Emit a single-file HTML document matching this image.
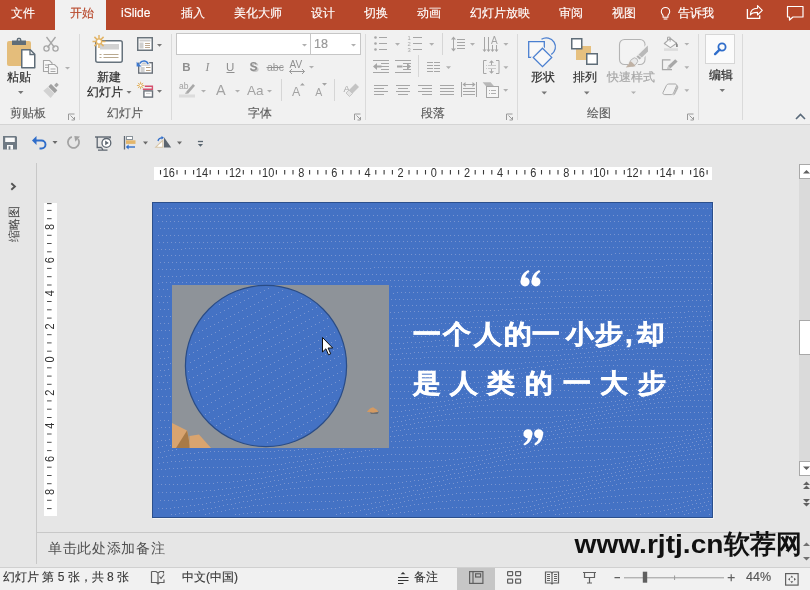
<!DOCTYPE html>
<html><head><meta charset="utf-8">
<style>
*{box-sizing:border-box;margin:0;padding:0}
html,body{width:810px;height:590px;overflow:hidden;background:#e6e6e6;font-family:"Liberation Sans",sans-serif;position:relative}
.a{position:absolute}
svg{position:absolute;left:0;top:0;will-change:transform}
.tab,.glab,.lbl,.st,.a{will-change:transform}
.tab{position:absolute;top:6px;font-size:12px;line-height:14px;color:#fff;white-space:nowrap;-webkit-text-stroke:0.15px currentColor}
.glab{position:absolute;top:106px;font-size:12px;line-height:14px;color:#5c5c5c;white-space:nowrap;-webkit-text-stroke:0.15px #5c5c5c}
.lbl{position:absolute;font-size:12px;line-height:14px;color:#444;white-space:nowrap;-webkit-text-stroke:0.2px currentColor}
.st{position:absolute;top:570px;font-size:12px;line-height:14px;color:#3a3a3a;white-space:nowrap;-webkit-text-stroke:0.15px currentColor}
</style></head><body>
<!-- backgrounds -->
<div class="a" style="left:0;top:0;width:810px;height:30px;background:#b7472a"></div>
<div class="a" style="left:55px;top:0;width:51px;height:30px;background:#f1f1f1"></div>
<div class="a" style="left:0;top:30px;width:810px;height:94px;background:#f1f1f1"></div>
<div class="a" style="left:0;top:124px;width:810px;height:1px;background:#d4d4d4"></div>
<div class="a" style="left:0;top:567px;width:810px;height:23px;background:#f1f1f1;border-top:1px solid #d0d0d0"></div>

<!-- tabs -->
<div class="tab" style="left:11px">文件</div>
<div class="tab" style="left:57px;color:#b7472a;width:49px;text-align:center">开始</div>
<div class="tab" style="left:121px">iSlide</div>
<div class="tab" style="left:181px">插入</div>
<div class="tab" style="left:234px">美化大师</div>
<div class="tab" style="left:311px">设计</div>
<div class="tab" style="left:364px">切换</div>
<div class="tab" style="left:417px">动画</div>
<div class="tab" style="left:470px">幻灯片放映</div>
<div class="tab" style="left:559px">审阅</div>
<div class="tab" style="left:612px">视图</div>
<div class="tab" style="left:678px">告诉我</div>

<svg width="810" height="130" viewBox="0 0 810 130">
<g fill="none" stroke-linecap="butt">
<!-- tab bar icons -->
<!-- bulb -->
<path d="M665.5 7.5a4.2 4.2 0 0 1 4.2 4.2c0 1.8-1.3 2.6-1.8 4v1.6h-4.8v-1.6c-.5-1.4-1.8-2.2-1.8-4a4.2 4.2 0 0 1 4.2-4.2z" stroke="#fff" stroke-width="1.1"/>
<path d="M663.6 19h3.8" stroke="#fff" stroke-width="1.1"/>
<!-- share -->
<path d="M747.4 9v9.4h12.3v-3.2" stroke="#fff" stroke-width="1.3"/>
<path d="M750.4 15C750.5 10.5 753 8.3 757.5 8.3V5.6L762.3 10.4L757.5 15V12.4C754 12.4 751.6 13 750.4 15Z" stroke="#fff" stroke-width="1.1" stroke-linejoin="round"/>
<!-- comment -->
<path d="M787.5 6.5h15.5v10.5h-10l-3.5 3v-3h-2z" stroke="#fff" stroke-width="1.2" stroke-linejoin="round"/>

<!-- separators -->
<path d="M79.5 34v86M171.5 34v86M365.5 34v86M517.5 34v86M698.5 34v86M742.5 34v86" stroke="#dadada" stroke-width="1"/>
<path d="M281.5 79v22M334.5 79v22M442.5 33v22M418.5 55v22" stroke="#d6d6d6" stroke-width="1"/>

<!-- launchers -->
<g stroke="#9a9a9a" stroke-width="1">
<path d="M68.5 120v-6h6"/><path d="M70.5 115.5l4 4M74.5 117v3h-3"/>
<path d="M354.5 120v-6h6"/><path d="M356.5 115.5l4 4M360.5 117v3h-3"/>
<path d="M506.5 120v-6h6"/><path d="M508.5 115.5l4 4M512.5 117v3h-3"/>
<path d="M687.5 120v-6h6"/><path d="M689.5 115.5l4 4M693.5 117v3h-3"/>
</g>
<!-- collapse chevron -->
<path d="M796 119l4.5-4.5 4.5 4.5" stroke="#5a6a7a" stroke-width="1.6"/>
</g>

<!-- dropdown arrows -->
<g fill="#777">
<path d="M18 91h5.5l-2.75 3z"/>
<path d="M126.5 91h5l-2.5 2.8z"/>
<path d="M157 44h5l-2.5 2.8z"/>
<path d="M157 90h5l-2.5 2.8z"/>
<path d="M541.5 91.5h5.5l-2.75 3z"/>
<path d="M584 91.5h5.5l-2.75 3z"/>
<path d="M719.5 89h5.5l-2.75 3z"/>
</g>
<g fill="#b0b0b0">
<path d="M65 67h5l-2.5 2.5z"/>
<path d="M309 66h5l-2.5 2.5z"/>
<path d="M201 90h5l-2.5 2.5z"/>
<path d="M235 90h5l-2.5 2.5z"/>
<path d="M267 90h5l-2.5 2.5z"/>
<path d="M395 43h5l-2.5 2.8z"/>
<path d="M429.2 43h5l-2.5 2.8z"/>
<path d="M470 43h5l-2.5 2.8z"/>
<path d="M503.4 43h5l-2.5 2.8z"/>
<path d="M446 66.2h5l-2.5 2.8z"/>
<path d="M503.4 66.2h5l-2.5 2.8z"/>
<path d="M503.2 89h5l-2.5 2.8z"/>
<path d="M631 91.5h5l-2.5 2.5z"/>
<path d="M684.4 43h4.8l-2.4 2.6z"/>
<path d="M684.4 66.3h4.8l-2.4 2.6z"/>
<path d="M684.4 89.3h4.8l-2.4 2.6z"/>
</g>

<!-- PASTE -->
<rect x="7" y="41" width="24" height="25" rx="2" fill="#e4bd7b"/>
<path d="M12 40.5h14v4.5h-14z" fill="#5f6d78"/>
<path d="M16.5 41a2.5 2.5 0 0 1 5 0z" fill="#5f6d78"/>
<rect x="16.8" y="37.8" width="4.4" height="3.5" rx="1.5" fill="#5f6d78"/>
<circle cx="19" cy="39.8" r="0.9" fill="#f1f1f1"/>
<path d="M21.75 49.75h8.5l4.5 4.5v13.5h-13z" fill="#fff" stroke="#5f6d78" stroke-width="1.5" stroke-linejoin="round"/>
<path d="M30 49.75v4.75h4.75" fill="none" stroke="#5f6d78" stroke-width="1.3"/>
<!-- cut -->
<g stroke="#a6a6a6" stroke-width="1.3" fill="none">
<path d="M46.5 37l8 10.5M55.5 37l-8 10.5"/>
<circle cx="46.5" cy="48.5" r="2.6"/><circle cx="55.5" cy="48.5" r="2.6"/>
</g>
<!-- copy -->
<g stroke="#a6a6a6" stroke-width="1.1" fill="#f8f8f8">
<path d="M43.5 60.5h6l2.5 2.5v8.5h-8.5z"/>
<path d="M48.5 64.5h6l3 3v6h-9z"/>
</g>
<g stroke="#a6a6a6" stroke-width="1"><path d="M45 65h4M45 67.5h3M50.5 69h5M50.5 71.5h5"/></g>
<!-- format painter -->
<g transform="translate(52.8 88.6) rotate(45)">
<rect x="-1.5" y="-6.9" width="3.2" height="3.6" rx="0.6" fill="#a6a6a6"/>
<rect x="-4.6" y="-2" width="9.2" height="3.8" rx="0.6" fill="#a0a0a0"/>
<path d="M-4.6 2.4H4.6L5.2 8.2H-5.2Z" fill="#d2d2d2"/>
</g>
<!-- NEW SLIDE -->
<rect x="95.75" y="40.75" width="26.5" height="21.5" rx="2" fill="#fff" stroke="#67737d" stroke-width="1.5"/>
<rect x="100" y="44" width="19" height="5.5" fill="#d2d2d2"/>
<path d="M99.5 54.5h2M103.5 54.5h15M99.5 57.5h2M103.5 57.5h15" stroke="#b9a98f" stroke-width="1"/>
<g stroke="#e2b467" stroke-width="1.5">
<path d="M99 35v13M92.5 41.5h13M94.4 36.9l9.2 9.2M103.6 36.9l-9.2 9.2"/>
</g>
<circle cx="99" cy="41.5" r="2.6" fill="#fff" stroke="#e2b467" stroke-width="1.3"/>
<!-- layout -->
<rect x="137.75" y="37.75" width="14.5" height="12.5" fill="#fff" stroke="#6a747c" stroke-width="1.5"/>
<path d="M139.5 40.5h11" stroke="#cfcfcf" stroke-width="2"/>
<rect x="139.5" y="42.5" width="4" height="6" fill="#d0d0d0"/>
<path d="M145 43.5h5M145 45.5h5M145 47.5h5" stroke="#b59f84" stroke-width="0.9"/>
<!-- reset -->
<rect x="138.7" y="62.7" width="13.6" height="10.4" fill="#fff" stroke="#6a7078" stroke-width="1.4"/>
<rect x="141" y="64.3" width="9" height="1.6" fill="#d4d4d4"/>
<rect x="140.6" y="67" width="4" height="5" fill="#d0d0d0"/>
<path d="M146 67.5h4.5M146 70.5h4.5" stroke="#b59f84" stroke-width="1"/>
<path d="M148 64.2C147.3 60.5 142 59.6 139.6 63.6" fill="none" stroke="#f1f1f1" stroke-width="3.4"/>
<path d="M148 64.2C147.3 60.5 142 59.6 139.6 63.6" fill="none" stroke="#3d79d0" stroke-width="1.7"/>
<path d="M136.6 61.8V66.6H141.6Z" fill="#3d79d0"/>
<!-- section -->
<path d="M144.8 86.2h7.6v3h-9.6" fill="none" stroke="#d5506e" stroke-width="1.4"/>
<rect x="143.9" y="90.9" width="8.6" height="6.2" fill="#fff" stroke="#6a7078" stroke-width="1.4"/>
<path d="M146 93.5h4.5" stroke="#d0d0d0" stroke-width="1.2"/>
<g stroke="#e2b467" stroke-width="1">
<path d="M140.6 81.8v7.4M136.9 85.5h7.4M138 82.9l5.2 5.2M143.2 82.9l-5.2 5.2"/>
</g>
<circle cx="140.6" cy="85.5" r="1.6" fill="#fff" stroke="#e2b467" stroke-width="1"/>

<!-- FONT boxes -->
<rect x="176.5" y="33.5" width="134" height="21" fill="#fff" stroke="#c6c6c6"/>
<rect x="310.5" y="33.5" width="50" height="21" fill="#fff" stroke="#c6c6c6"/>
<path d="M302 44h5l-2.5 2.5z M351 44h5l-2.5 2.5z" fill="#b0b0b0"/>
</svg>
<svg width="810" height="130" viewBox="0 0 810 130">
<!-- FONT group glyph icons -->
<g fill="#8f8f8f" font-family="Liberation Sans" >
<text x="182.3" y="71" font-size="11.5" font-weight="bold">B</text>
<text x="205.5" y="71" font-size="11.5" font-style="italic" font-family="Liberation Serif">I</text>
<text x="226" y="71" font-size="11.5">U</text>
<text x="267" y="71" font-size="10.5" fill="#9a9a9a">abc</text>
<text x="289.5" y="67.5" font-size="10">AV</text>
<text x="216" y="95" font-size="14.5" fill="#a3a3a3">A</text>
<text x="247" y="95" font-size="13.5" fill="#a3a3a3">Aa</text>
<text x="292" y="96" font-size="12.5" fill="#a3a3a3">A</text>
<text x="315.3" y="96" font-size="10.5" fill="#a3a3a3">A</text>
<text x="343.5" y="92" font-size="9.5" fill="#a8a8a8">A</text>
<text x="179" y="89.3" font-size="8.5" fill="#a0a0a0">ab</text>
</g>
<path d="M226.5 72.5h8" stroke="#8f8f8f" stroke-width="1"/>
<text x="251" y="72" font-size="12" font-weight="bold" fill="#c8c8c8" font-family="Liberation Sans">S</text>
<text x="249.5" y="71" font-size="12" font-weight="bold" fill="#8f8f8f" font-family="Liberation Sans">S</text>
<path d="M266.5 67.5h17" stroke="#909090" stroke-width="1"/>
<path d="M289.5 71.5h15M292 69l-2.5 2.5 2.5 2.5M302 69l2.5 2.5-2.5 2.5" stroke="#9a9a9a" stroke-width="1" fill="none"/>
<path d="M300 85.5l2.4-2.5 2.4 2.5z M322 83h5l-2.5 2.8z" fill="#a3a3a3"/>
<!-- highlight pen -->
<path d="M186 92l7-8 2 1.8-7 8z" fill="#a8a8a8"/>
<path d="M185 93.8l1-1.8 2 1.8z" fill="#a8a8a8"/>
<rect x="179" y="94.5" width="16" height="3" fill="#dcdcdc"/>
<!-- eraser -->
<path d="M349 90l6.5-6.5 3.5 3.5-6.5 6.5z" fill="#c4c4c4"/>
<path d="M346 93l3-3 3.5 3.5-3 3z" fill="#e4e4e4" stroke="#bdbdbd" stroke-width="0.8"/>

<!-- PARAGRAPH -->
<g stroke="#a6a6a6" stroke-width="1" fill="none">
<path d="M379 37.5h8M379 43.5h8M379 49.5h8"/>
<path d="M413 37.5h9M413 43.5h9M413 49.5h9"/>
<path d="M457 39.5h8M457 42.5h8M457 45.5h8M457 48.5h8"/>
<path d="M453.5 37v14"/>
<path d="M484.5 37v13M488.5 37v13M492.5 45v5M496.5 45v5"/>
<path d="M373 60.5h16M381 63.5h8M381 66.5h8M381 69.5h8M373 72.5h16"/>
<path d="M395 60.5h16M403 63.5h8M403 66.5h8M403 69.5h8M395 72.5h16"/>
<path d="M427 62.5h6M427 65.5h6M427 68.5h6M427 71.5h6M434 62.5h6M434 65.5h6M434 68.5h6M434 71.5h6"/>
<path d="M486.5 60.5h-3v13h3M496 60.5h3v13h-3"/>
<path d="M491.5 61v4M491.5 69v4"/>
<path d="M374 85.5h14M374 88.5h10M374 91.5h14M374 94.5h10"/>
<path d="M396 85.5h14M398 88.5h10M396 91.5h14M398 94.5h10"/>
<path d="M418 85.5h14M422 88.5h10M418 91.5h14M422 94.5h10"/>
<path d="M440 85.5h14M440 88.5h14M440 91.5h14M440 94.5h14"/>
<path d="M461.5 82v15M476.5 82v15M463 84.5h12M463 88.5h12M463 91.5h12M463 94.5h12"/>
</g>
<g stroke="#c9c9c9" stroke-width="1"><path d="M486 65.5h1M488 65.5h8M486 68.5h1M488 68.5h8"/></g>
<g fill="#a6a6a6">
<circle cx="375.5" cy="37.5" r="1.3"/><circle cx="375.5" cy="43.5" r="1.3"/><circle cx="375.5" cy="49.5" r="1.3"/>
<text x="407.6" y="40" font-size="5.8" font-family="Liberation Sans">1</text>
<text x="407.6" y="46" font-size="5.8" font-family="Liberation Sans">2</text>
<text x="407.6" y="52" font-size="5.8" font-family="Liberation Sans">3</text>
<path d="M451 39.5l2.5-3 2.5 3z M451 48.5l2.5 3 2.5-3z"/>
<text x="491" y="43.6" font-size="10" font-family="Liberation Sans">A</text>
<path d="M482.5 49.5l2 2.5 2-2.5zM486.5 49.5l2 2.5 2-2.5zM490.5 49.5l2 2.5 2-2.5zM494.5 49.5l2 2.5 2-2.5z"/>
<path d="M373 66.5l4-3.5v7z M411 66.5l-4-3.5v7z"/>
<path d="M462.5 84.5l3-2.5v5z M475.5 84.5l-3-2.5v5z"/>
<path d="M489 62.8l2.5-2.5 2.5 2.5z M489 71.2l2.5 2.5 2.5-2.5z"/>
</g>
<path d="M376 66.5h5.5M397 66.5h5.5" stroke="#a6a6a6" stroke-width="2"/>
<path d="M482.6 82.3h8l3.5 4h-8z" fill="#b8b8b8"/>
<rect x="486.5" y="86.5" width="12" height="11" fill="#f6f6f6" stroke="#a6a6a6" stroke-width="1"/>
<path d="M489 90.5h1M491 90.5h5M489 93.5h1M491 93.5h5" stroke="#b0b0b0" stroke-width="1"/>
<!-- DRAWING -->
<!-- shapes -->
<path d="M528.7 41.7h15.6v15.6h-15.6z" fill="#f8f8f8" stroke="#4a7fd0" stroke-width="1.3"/>
<path d="M541.5 39.3A8 8 0 1 1 551.2 54.6" fill="none" stroke="#4a7fd0" stroke-width="1.3"/>
<path d="M542.5 48.2l9.2 9.2-9.2 9.2-9.2-9.2z" fill="#f8f8f8" stroke="#f1f1f1" stroke-width="3.5"/>
<path d="M542.5 48.2l9.2 9.2-9.2 9.2-9.2-9.2z" fill="#f8f8f8" stroke="#4a7fd0" stroke-width="1.3"/>
<!-- arrange -->
<rect x="576" y="46" width="15" height="14" fill="#e6c07f"/>
<rect x="571.75" y="38.75" width="10" height="10" fill="#fff" stroke="#5f6d78" stroke-width="1.5"/>
<rect x="586.75" y="53.75" width="10.5" height="10.5" fill="#fff" stroke="#5f6d78" stroke-width="1.5"/>
<!-- quick styles -->
<rect x="619.5" y="39.5" width="25.5" height="25" rx="5" fill="#f3f3f3" stroke="#b4b4b4" stroke-width="1.1"/>
<g stroke="#f1f1f1" stroke-width="3.2" fill="#f1f1f1" stroke-linejoin="round">
<path d="M647.8 45.5L648 51.5L640.6 58.6L637.2 55.9Z"/>
<ellipse cx="633.6" cy="62" rx="4.6" ry="3.3" transform="rotate(-45 633.6 62)"/>
</g>
<path d="M647.8 45.5L648 51.5L641.8 57.4L638.4 54.8Z" fill="#b9b9b9"/>
<path d="M638 55.2L641.2 58L639.6 59.6L636.4 56.8Z" fill="#b0b0b0"/>
<ellipse cx="633.6" cy="62" rx="4.6" ry="3.3" transform="rotate(-45 633.6 62)" fill="#e8e8e8" stroke="#b4b4b4" stroke-width="0.9"/>
<path d="M625.8 67.4L630.6 61.2C632.5 62.4 634.2 64 635.6 66.2Z" fill="#bfb1a4"/>
<!-- fill -->
<path d="M664.3 43.5L670.2 38.3L676.6 43.2L670.4 47.6Z" fill="#f8f8f8" stroke="#a8a8a8" stroke-width="1.1" stroke-linejoin="round"/>
<path d="M667.5 40.5V37.2h2.6v4.5" fill="none" stroke="#a8a8a8" stroke-width="1"/>
<path d="M676 42.2l1.8 2.2v2.6h-1.8z" fill="#8a8a8a"/>
<rect x="664" y="48.3" width="14" height="2.6" fill="#dcdcdc"/>
<!-- outline -->
<path d="M670.5 59.8h-8v9.8h9.5" stroke="#a8a8a8" stroke-width="1.2" fill="none"/>
<path d="M667.2 69.3l1-3.6 7-6.5 2.4 2.4-7 6.6z" fill="#a8a8a8"/>
<path d="M667.2 69.3l1-3.6 2.4 2.5z" fill="#c8c8c8"/>
<!-- effects -->
<path d="M663 92.5l3.5-7.2c.5-.9 1.2-1.3 2.2-1.3h6.3c1.3 0 1.9 1 1.5 2l-3 7.2c-.4.9-1.2 1.4-2.2 1.4h-6.6c-1.3 0-2.1-1-1.7-2.1z" fill="#f2f2f2" stroke="#a9a9a9" stroke-width="1"/>
<path d="M673.5 94.4l3-7.2c.4-.9.6-1.5.3-2.6l1.3 1.6c.4.8.3 1.6-.1 2.4l-2.8 5.4c-.5 1-1.4 1.3-2.5 1.3z" fill="#b5b5b5"/>
<!-- EDITING -->
<rect x="705.5" y="34.5" width="29" height="29" fill="#fbfbfb" stroke="#d6d6d6"/>
<circle cx="722" cy="47" r="3.6" fill="none" stroke="#2f6dca" stroke-width="1.8"/>
<path d="M719.6 49.6l-4.5 4.5" stroke="#2f6dca" stroke-width="2.4" stroke-linecap="round"/>
</svg>

<div class="lbl" style="left:7px;top:70px;color:#2e2e2e">粘贴</div>
<div class="glab" style="left:10px">剪贴板</div>
<div class="lbl" style="left:97px;top:70px;color:#2e2e2e">新建</div>
<div class="lbl" style="left:87px;top:85px;color:#2e2e2e">幻灯片</div>
<div class="glab" style="left:107px">幻灯片</div>
<div class="lbl" style="left:314px;top:37px;color:#999;font-size:12.5px">18</div>
<div class="glab" style="left:248px">字体</div>
<div class="glab" style="left:421px">段落</div>
<div class="lbl" style="left:531px;top:70px;color:#2e2e2e">形状</div>
<div class="lbl" style="left:573px;top:70px;color:#2e2e2e">排列</div>
<div class="lbl" style="left:607px;top:70px;color:#a8a8a8">快速样式</div>
<div class="glab" style="left:587px">绘图</div>
<div class="lbl" style="left:709px;top:68px;color:#2e2e2e">编辑</div>

<svg width="810" height="160" viewBox="0 0 810 160">
<!-- save -->
<path d="M3 136h13l1 1v12.6h-14z" fill="#6f7a84"/>
<rect x="5.2" y="137.6" width="9.6" height="4.4" fill="#fafafa"/>
<rect x="7" y="145" width="6" height="4.6" fill="#fafafa"/>
<rect x="8.6" y="146.2" width="1.8" height="3.4" fill="#6f7a84"/>
<!-- undo -->
<path d="M35 140.5h6.5a4 4 0 0 1 0 8h-2" fill="none" stroke="#2f6dca" stroke-width="1.9"/>
<path d="M32 140.5l4.5-4.5v9z" fill="#2f6dca"/>
<path d="M52.5 141h5l-2.5 3z" fill="#6a6a6a"/>
<!-- redo -->
<path d="M71.86 136.94A5.6 5.6 0 1 0 78.09 139.09" fill="none" stroke="#a3a3a3" stroke-width="1.8"/>
<path d="M74.3 136L80 136.6L75.3 141.8z" fill="#a3a3a3"/>
<!-- slideshow -->
<path d="M95 137h16" stroke="#5d6670" stroke-width="1.4"/>
<path d="M97.2 137v10.5h4.5M110 137v1.5" stroke="#5d6670" stroke-width="1.3" fill="none"/>
<circle cx="106.4" cy="142.9" r="4.4" fill="#fff" stroke="#5d6670" stroke-width="1.3"/>
<path d="M105.2 140.6v4.6l3.6-2.3z" fill="#5d6670"/>
<path d="M101.5 147.5l1.5 2.6M98 150.2h9.5" stroke="#5d6670" stroke-width="1.2"/>
<!-- align -->
<path d="M124.5 136v13.5" stroke="#5d6670" stroke-width="1.3"/>
<rect x="126.5" y="136.5" width="6" height="3" fill="#fff" stroke="#8a939a" stroke-width="1"/>
<rect x="126" y="140.3" width="9.5" height="3.6" fill="#e3b66b"/>
<path d="M127 147h8" stroke="#2f6dca" stroke-width="1.4"/>
<path d="M125.8 147l2.8-2.5v5z" fill="#2f6dca"/>
<path d="M143 141.5h5l-2.5 3z" fill="#6a6a6a"/>
<!-- rotate -->
<path d="M155.8 147.2l7-6.8v6.8z" fill="#fff" stroke="#d8c6a8" stroke-width="1.1"/>
<path d="M164 137.2v10.4h7.2z" fill="#5d6670"/>
<path d="M158 141a4 4 0 0 1 4-3.2" fill="none" stroke="#2f6dca" stroke-width="1.3"/>
<path d="M161.5 136l2.5 1.8-2.5 1.8z" fill="#2f6dca"/>
<path d="M177 141.5h5l-2.5 3z" fill="#6a6a6a"/>
<!-- customize -->
<path d="M197.9 141.5h5.1" stroke="#5a6670" stroke-width="1.3"/>
<path d="M197.9 144h5.1l-2.55 2.8z" fill="#5a6670"/>
</svg>

<div class="a" style="left:36px;top:163px;width:1px;height:401px;background:#c8c8c8"></div>
<svg width="810" height="590" viewBox="0 0 810 590">
<path d="M11.3 183.3l3.6 3.2-3.6 3.2" fill="none" stroke="#555" stroke-width="1.9"/>
<path d="M37 532.5h762" stroke="#c8c8c8" stroke-width="1"/>
<rect x="154" y="167" width="558" height="13" fill="#fff"/>
<text x="168.76" y="176.8" font-size="12.6" fill="#333" text-anchor="middle" font-family="Liberation Sans" textLength="12.2" lengthAdjust="spacingAndGlyphs">16</text>
<text x="201.89" y="176.8" font-size="12.6" fill="#333" text-anchor="middle" font-family="Liberation Sans" textLength="12.2" lengthAdjust="spacingAndGlyphs">14</text>
<text x="235.02" y="176.8" font-size="12.6" fill="#333" text-anchor="middle" font-family="Liberation Sans" textLength="12.2" lengthAdjust="spacingAndGlyphs">12</text>
<text x="268.15" y="176.8" font-size="12.6" fill="#333" text-anchor="middle" font-family="Liberation Sans" textLength="12.2" lengthAdjust="spacingAndGlyphs">10</text>
<text x="301.28" y="176.8" font-size="12.6" fill="#333" text-anchor="middle" font-family="Liberation Sans" textLength="6.1" lengthAdjust="spacingAndGlyphs">8</text>
<text x="334.41" y="176.8" font-size="12.6" fill="#333" text-anchor="middle" font-family="Liberation Sans" textLength="6.1" lengthAdjust="spacingAndGlyphs">6</text>
<text x="367.54" y="176.8" font-size="12.6" fill="#333" text-anchor="middle" font-family="Liberation Sans" textLength="6.1" lengthAdjust="spacingAndGlyphs">4</text>
<text x="400.67" y="176.8" font-size="12.6" fill="#333" text-anchor="middle" font-family="Liberation Sans" textLength="6.1" lengthAdjust="spacingAndGlyphs">2</text>
<text x="433.80" y="176.8" font-size="12.6" fill="#333" text-anchor="middle" font-family="Liberation Sans" textLength="6.1" lengthAdjust="spacingAndGlyphs">0</text>
<text x="466.93" y="176.8" font-size="12.6" fill="#333" text-anchor="middle" font-family="Liberation Sans" textLength="6.1" lengthAdjust="spacingAndGlyphs">2</text>
<text x="500.06" y="176.8" font-size="12.6" fill="#333" text-anchor="middle" font-family="Liberation Sans" textLength="6.1" lengthAdjust="spacingAndGlyphs">4</text>
<text x="533.19" y="176.8" font-size="12.6" fill="#333" text-anchor="middle" font-family="Liberation Sans" textLength="6.1" lengthAdjust="spacingAndGlyphs">6</text>
<text x="566.32" y="176.8" font-size="12.6" fill="#333" text-anchor="middle" font-family="Liberation Sans" textLength="6.1" lengthAdjust="spacingAndGlyphs">8</text>
<text x="599.45" y="176.8" font-size="12.6" fill="#333" text-anchor="middle" font-family="Liberation Sans" textLength="12.2" lengthAdjust="spacingAndGlyphs">10</text>
<text x="632.58" y="176.8" font-size="12.6" fill="#333" text-anchor="middle" font-family="Liberation Sans" textLength="12.2" lengthAdjust="spacingAndGlyphs">12</text>
<text x="665.71" y="176.8" font-size="12.6" fill="#333" text-anchor="middle" font-family="Liberation Sans" textLength="12.2" lengthAdjust="spacingAndGlyphs">14</text>
<text x="698.84" y="176.8" font-size="12.6" fill="#333" text-anchor="middle" font-family="Liberation Sans" textLength="12.2" lengthAdjust="spacingAndGlyphs">16</text>
<path d="M160.5 170v4.6M177.0 170v4.6M185.3 170v4.6M193.6 170v4.6M210.2 170v4.6M218.5 170v4.6M226.7 170v4.6M243.3 170v4.6M251.6 170v4.6M259.9 170v4.6M276.4 170v4.6M284.7 170v4.6M293.0 170v4.6M309.6 170v4.6M317.8 170v4.6M326.1 170v4.6M342.7 170v4.6M351.0 170v4.6M359.3 170v4.6M375.8 170v4.6M384.1 170v4.6M392.4 170v4.6M409.0 170v4.6M417.2 170v4.6M425.5 170v4.6M442.1 170v4.6M450.4 170v4.6M458.6 170v4.6M475.2 170v4.6M483.5 170v4.6M491.8 170v4.6M508.3 170v4.6M516.6 170v4.6M524.9 170v4.6M541.5 170v4.6M549.8 170v4.6M558.0 170v4.6M574.6 170v4.6M582.9 170v4.6M591.2 170v4.6M607.7 170v4.6M616.0 170v4.6M624.3 170v4.6M640.9 170v4.6M649.1 170v4.6M657.4 170v4.6M674.0 170v4.6M682.3 170v4.6M690.6 170v4.6M707.1 170v4.6" stroke="#3a3a3a" stroke-width="1.1"/>
<rect x="44" y="203" width="13" height="313" fill="#fff"/>
<text transform="translate(53.6 226.98) rotate(-90)" x="0" y="0" font-size="12.6" fill="#333" text-anchor="middle" font-family="Liberation Sans" textLength="6.1" lengthAdjust="spacingAndGlyphs">8</text>
<text transform="translate(53.6 260.11) rotate(-90)" x="0" y="0" font-size="12.6" fill="#333" text-anchor="middle" font-family="Liberation Sans" textLength="6.1" lengthAdjust="spacingAndGlyphs">6</text>
<text transform="translate(53.6 293.24) rotate(-90)" x="0" y="0" font-size="12.6" fill="#333" text-anchor="middle" font-family="Liberation Sans" textLength="6.1" lengthAdjust="spacingAndGlyphs">4</text>
<text transform="translate(53.6 326.37) rotate(-90)" x="0" y="0" font-size="12.6" fill="#333" text-anchor="middle" font-family="Liberation Sans" textLength="6.1" lengthAdjust="spacingAndGlyphs">2</text>
<text transform="translate(53.6 359.50) rotate(-90)" x="0" y="0" font-size="12.6" fill="#333" text-anchor="middle" font-family="Liberation Sans" textLength="6.1" lengthAdjust="spacingAndGlyphs">0</text>
<text transform="translate(53.6 392.63) rotate(-90)" x="0" y="0" font-size="12.6" fill="#333" text-anchor="middle" font-family="Liberation Sans" textLength="6.1" lengthAdjust="spacingAndGlyphs">2</text>
<text transform="translate(53.6 425.76) rotate(-90)" x="0" y="0" font-size="12.6" fill="#333" text-anchor="middle" font-family="Liberation Sans" textLength="6.1" lengthAdjust="spacingAndGlyphs">4</text>
<text transform="translate(53.6 458.89) rotate(-90)" x="0" y="0" font-size="12.6" fill="#333" text-anchor="middle" font-family="Liberation Sans" textLength="6.1" lengthAdjust="spacingAndGlyphs">6</text>
<text transform="translate(53.6 492.02) rotate(-90)" x="0" y="0" font-size="12.6" fill="#333" text-anchor="middle" font-family="Liberation Sans" textLength="6.1" lengthAdjust="spacingAndGlyphs">8</text>
<path d="M47 203.6h4.6M47 210.4h4.6M47 218.7h4.6M47 235.3h4.6M47 243.5h4.6M47 251.8h4.6M47 268.4h4.6M47 276.7h4.6M47 285.0h4.6M47 301.5h4.6M47 309.8h4.6M47 318.1h4.6M47 334.7h4.6M47 342.9h4.6M47 351.2h4.6M47 367.8h4.6M47 376.1h4.6M47 384.3h4.6M47 400.9h4.6M47 409.2h4.6M47 417.5h4.6M47 434.0h4.6M47 442.3h4.6M47 450.6h4.6M47 467.2h4.6M47 475.5h4.6M47 483.7h4.6M47 500.3h4.6M47 508.6h4.6" stroke="#505050" stroke-width="1"/>
<rect x="799" y="178" width="11" height="284" fill="#dadada"/>
<rect x="799.5" y="164.5" width="12" height="14" fill="#fff" stroke="#a8a8a8"/>
<path d="M803 173.5h7l-3.5-3.5z" fill="#606060"/>
<rect x="799.5" y="320.5" width="12" height="34" fill="#fff" stroke="#a8a8a8"/>
<rect x="799.5" y="461.5" width="12" height="14" fill="#fff" stroke="#a8a8a8"/>
<path d="M803 466.5h7l-3.5 3.5z" fill="#606060"/>
<path d="M803 485h7l-3.5-3.5zM803 489h7l-3.5-3.5z" fill="#606060"/>
<path d="M803 499h7l-3.5 3.5zM803 503h7l-3.5 3.5z" fill="#606060"/>
<path d="M803 546h7l-3.5-3.5z" fill="#707070"/>
<path d="M803 557h7l-3.5 3.5z" fill="#707070"/>
</svg>
<div class="a" style="left:-4px;top:217px;width:36px;height:14px;transform:rotate(-90deg);font-size:12px;line-height:14px;color:#444;text-align:center;white-space:nowrap">缩略图</div>
<div class="a" style="left:48px;top:540px;font-size:14.4px;letter-spacing:0.7px;line-height:17px;color:#505050;white-space:nowrap">单击此处添加备注</div>
<svg width="810" height="590" viewBox="0 0 810 590">
<defs><clipPath id="sc"><rect x="153" y="203" width="559" height="314"/></clipPath>
<clipPath id="cc"><circle cx="266" cy="366" r="80.6"/></clipPath></defs>
<rect x="152.5" y="202.5" width="560" height="315" fill="#4472c4" stroke="#2b4f8c" stroke-width="1"/>
<path d="M713.5 203v315.5H153" fill="none" stroke="#f4f4f4" stroke-width="1"/>
<path d="M159 208.5h1M163 208.5h1M167 208.5h1M171 208.5h1M175 208.5h1M179 208.5h1M183 208.5h1M187 208.5h1M191 208.5h1M195 208.5h1M199 208.5h1M203 208.5h1M207 208.5h1M211 208.5h1M215 208.5h1M219 208.5h1M223 208.5h1M227 208.5h1M231 208.5h1M235 208.5h1M239 208.5h1M243 208.5h1M247 208.5h1M251 208.5h1M255 208.5h1M259 208.5h1M263 208.5h1M267 208.5h1M271 208.5h1M275 208.5h1M279 208.5h1M283 208.5h1M287 208.5h1M291 208.5h1M295 208.5h1M299 208.5h1M303 208.5h1M307 208.5h1M311 208.5h1M315 208.5h1M319 208.5h1M323 208.5h1M327 208.5h1M331 208.5h1M335 208.5h1M339 208.5h1M343 208.5h1M347 208.5h1M351 208.5h1M355 208.5h1M359 208.5h1M363 208.5h1M367 208.5h1M371 208.5h1M375 208.5h1M379 208.5h1M383 208.5h1M387 208.5h1M391 208.5h1M395 208.5h1M399 208.5h1M403 208.5h1M407 208.5h1M411 208.5h1M415 208.5h1M419 208.5h1M423 208.5h1M427 208.5h1M431 208.5h1M435 208.5h1M439 208.5h1M443 208.5h1M447 208.5h1M451 208.5h1M455 208.5h1M459 208.5h1M463 208.5h1M467 208.5h1M471 208.5h1M475 208.5h1M479 208.5h1M483 208.5h1M487 208.5h1M491 208.5h1M495 208.5h1M499 208.5h1M503 208.5h1M507 208.5h1M511 208.5h1M515 208.5h1M519 208.5h1M523 208.5h1M527 208.5h1M531 208.5h1M535 208.5h1M539 208.5h1M543 208.5h1M547 208.5h1M551 208.5h1M555 208.5h1M559 208.5h1M563 208.5h1M567 208.5h1M571 208.5h1M575 208.5h1M579 208.5h1M583 208.5h1M587 208.5h1M591 208.5h1M595 208.5h1M599 208.5h1M603 208.5h1M607 208.5h1M611 208.5h1M615 208.5h1M619 208.5h1M623 208.5h1M627 208.5h1M631 208.5h1M635 208.5h1M639 208.5h1M643 208.5h1M647 208.5h1M651 208.5h1M655 208.5h1M659 208.5h1M663 208.5h1M667 208.5h1M671 208.5h1M675 208.5h1M679 208.5h1M683 208.5h1M687 208.5h1M691 208.5h1M695 208.5h1M699 208.5h1M703 208.5h1M707 208.5h1M711 208.5h1M157 215.5h1M161 215.5h1M165 215.5h1M169 215.5h1M173 215.5h1M177 215.5h1M181 215.5h1M185 215.5h1M189 215.5h1M193 215.5h1M197 215.5h1M201 215.5h1M205 215.5h1M209 215.5h1M213 215.5h1M217 215.5h1M221 215.5h1M225 215.5h1M229 215.5h1M233 215.5h1M237 215.5h1M241 215.5h1M245 215.5h1M249 215.5h1M253 215.5h1M257 215.5h1M261 215.5h1M265 215.5h1M269 215.5h1M273 215.5h1M277 215.5h1M281 215.5h1M285 215.5h1M289 215.5h1M293 215.5h1M297 215.5h1M301 215.5h1M305 215.5h1M309 215.5h1M313 215.5h1M317 215.5h1M321 215.5h1M325 215.5h1M329 215.5h1M333 215.5h1M337 215.5h1M341 215.5h1M345 215.5h1M349 215.5h1M353 215.5h1M357 215.5h1M361 215.5h1M365 215.5h1M369 215.5h1M373 215.5h1M377 215.5h1M381 215.5h1M385 215.5h1M389 215.5h1M393 215.5h1M397 215.5h1M401 215.5h1M405 215.5h1M409 215.5h1M413 215.5h1M417 215.5h1M421 215.5h1M425 215.5h1M429 215.5h1M433 215.5h1M437 215.5h1M441 215.5h1M445 215.5h1M449 215.5h1M453 215.5h1M457 215.5h1M461 215.5h1M465 215.5h1M469 215.5h1M473 215.5h1M477 215.5h1M481 215.5h1M485 215.5h1M489 215.5h1M493 215.5h1M497 215.5h1M501 215.5h1M505 215.5h1M509 215.5h1M513 215.5h1M517 215.5h1M521 215.5h1M525 215.5h1M529 215.5h1M533 215.5h1M537 215.5h1M541 215.5h1M545 215.5h1M549 215.5h1M553 215.5h1M557 215.5h1M561 215.5h1M565 215.5h1M569 215.5h1M573 215.5h1M577 215.5h1M581 215.5h1M585 215.5h1M589 215.5h1M593 215.5h1M597 215.5h1M601 215.5h1M605 215.5h1M609 215.5h1M613 215.5h1M617 215.5h1M621 215.5h1M625 215.5h1M629 215.5h1M633 215.5h1M637 215.5h1M641 215.5h1M645 215.5h1M649 215.5h1M653 215.5h1M657 215.5h1M661 215.5h1M665 215.5h1M669 215.5h1M673 215.5h1M677 215.5h1M681 215.5h1M685 215.5h1M689 215.5h1M693 215.5h1M697 215.5h1M701 215.5h1M705 215.5h1M709 215.5h1M158 221.5h1M162 221.5h1M166 221.5h1M170 221.5h1M174 221.5h1M178 221.5h1M182 221.5h1M186 221.5h1M190 221.5h1M194 221.5h1M198 221.5h1M202 221.5h1M206 221.5h1M210 221.5h1M214 221.5h1M218 221.5h1M222 221.5h1M226 221.5h1M230 221.5h1M234 221.5h1M238 221.5h1M242 221.5h1M246 221.5h1M250 221.5h1M254 221.5h1M258 221.5h1M262 221.5h1M266 221.5h1M270 221.5h1M274 221.5h1M278 221.5h1M282 221.5h1M286 221.5h1M290 221.5h1M294 221.5h1M298 221.5h1M302 221.5h1M306 221.5h1M310 221.5h1M314 221.5h1M318 221.5h1M322 221.5h1M326 221.5h1M330 221.5h1M334 221.5h1M338 221.5h1M342 221.5h1M346 221.5h1M350 221.5h1M354 221.5h1M358 221.5h1M362 221.5h1M366 221.5h1M370 221.5h1M374 221.5h1M378 221.5h1M382 221.5h1M386 221.5h1M390 221.5h1M394 221.5h1M398 221.5h1M402 221.5h1M406 221.5h1M410 221.5h1M414 221.5h1M418 221.5h1M422 221.5h1M426 221.5h1M430 221.5h1M434 221.5h1M438 221.5h1M442 221.5h1M446 221.5h1M450 221.5h1M454 221.5h1M458 221.5h1M462 221.5h1M466 221.5h1M470 221.5h1M474 221.5h1M478 221.5h1M482 221.5h1M486 221.5h1M490 221.5h1M494 221.5h1M498 221.5h1M502 221.5h1M506 221.5h1M510 221.5h1M514 221.5h1M518 221.5h1M522 221.5h1M526 221.5h1M530 221.5h1M534 221.5h1M538 221.5h1M542 221.5h1M546 221.5h1M550 221.5h1M554 221.5h1M558 221.5h1M562 221.5h1M566 221.5h1M570 221.5h1M574 221.5h1M578 221.5h1M582 221.5h1M586 221.5h1M590 221.5h1M594 221.5h1M598 221.5h1M602 221.5h1M606 221.5h1M610 221.5h1M614 221.5h1M618 221.5h1M622 221.5h1M626 221.5h1M630 221.5h1M634 221.5h1M638 221.5h1M642 221.5h1M646 221.5h1M650 221.5h1M654 221.5h1M658 221.5h1M662 221.5h1M666 221.5h1M670 221.5h1M674 221.5h1M678 221.5h1M682 221.5h1M686 221.5h1M690 221.5h1M694 221.5h1M698 221.5h1M702 221.5h1M706 221.5h1M710 221.5h1M160 228.5h1M164 228.5h1M168 228.5h1M172 228.5h1M176 228.5h1M180 228.5h1M184 228.5h1M188 228.5h1M192 228.5h1M196 228.5h1M200 228.5h1M204 228.5h1M208 228.5h1M212 228.5h1M216 228.5h1M220 228.5h1M224 228.5h1M228 228.5h1M232 228.5h1M236 228.5h1M240 228.5h1M244 228.5h1M248 228.5h1M252 228.5h1M256 228.5h1M260 228.5h1M264 228.5h1M268 228.5h1M272 228.5h1M276 228.5h1M280 228.5h1M284 228.5h1M288 228.5h1M292 228.5h1M296 228.5h1M300 228.5h1M304 228.5h1M308 228.5h1M312 228.5h1M316 228.5h1M320 228.5h1M324 228.5h1M328 228.5h1M332 228.5h1M336 228.5h1M340 228.5h1M344 228.5h1M348 228.5h1M352 228.5h1M356 228.5h1M360 228.5h1M364 228.5h1M368 228.5h1M372 228.5h1M376 228.5h1M380 228.5h1M384 228.5h1M388 228.5h1M392 228.5h1M396 228.5h1M400 228.5h1M404 228.5h1M408 228.5h1M412 228.5h1M416 228.5h1M420 228.5h1M424 228.5h1M428 228.5h1M432 228.5h1M436 228.5h1M440 228.5h1M444 228.5h1M448 228.5h1M452 228.5h1M456 228.5h1M460 228.5h1M464 228.5h1M468 228.5h1M472 228.5h1M476 228.5h1M480 228.5h1M484 228.5h1M488 228.5h1M492 228.5h1M496 228.5h1M500 228.5h1M504 228.5h1M508 228.5h1M512 228.5h1M516 228.5h1M520 228.5h1M524 228.5h1M528 228.5h1M532 228.5h1M536 228.5h1M540 228.5h1M544 228.5h1M548 228.5h1M552 228.5h1M556 228.5h1M560 228.5h1M564 228.5h1M568 228.5h1M572 228.5h1M576 228.5h1M580 228.5h1M584 228.5h1M588 228.5h1M592 228.5h1M596 228.5h1M600 228.5h1M604 228.5h1M608 228.5h1M612 228.5h1M616 228.5h1M620 228.5h1M624 228.5h1M628 228.5h1M632 228.5h1M636 228.5h1M640 228.5h1M644 228.5h1M648 228.5h1M652 228.5h1M656 228.5h1M660 228.5h1M664 228.5h1M668 228.5h1M672 228.5h1M676 228.5h1M680 228.5h1M684 228.5h1M688 228.5h1M692 228.5h1M696 228.5h1M700 228.5h1M704 228.5h1M708 228.5h1M158 235.5h1M162 235.5h1M166 235.5h1M170 235.5h1M174 235.5h1M178 235.5h1M182 235.5h1M186 235.5h1M190 235.5h1M194 235.5h1M198 235.5h1M202 235.5h1M206 235.5h1M210 235.5h1M214 235.5h1M218 235.5h1M222 235.5h1M226 235.5h1M230 235.5h1M234 235.5h1M238 235.5h1M242 235.5h1M246 235.5h1M250 235.5h1M254 235.5h1M258 235.5h1M262 235.5h1M266 235.5h1M270 235.5h1M274 235.5h1M278 235.5h1M282 235.5h1M286 235.5h1M290 235.5h1M294 235.5h1M298 235.5h1M302 235.5h1M306 235.5h1M310 235.5h1M314 235.5h1M318 235.5h1M322 235.5h1M326 235.5h1M330 235.5h1M334 235.5h1M338 235.5h1M342 235.5h1M346 235.5h1M350 235.5h1M354 235.5h1M358 235.5h1M362 235.5h1M366 235.5h1M370 235.5h1M374 235.5h1M378 235.5h1M382 235.5h1M386 235.5h1M390 235.5h1M394 235.5h1M398 235.5h1M402 235.5h1M406 235.5h1M410 235.5h1M414 235.5h1M418 235.5h1M422 235.5h1M426 235.5h1M430 235.5h1M434 235.5h1M438 235.5h1M442 235.5h1M446 235.5h1M450 235.5h1M454 235.5h1M458 235.5h1M462 235.5h1M466 235.5h1M470 235.5h1M474 235.5h1M478 235.5h1M482 235.5h1M486 235.5h1M490 235.5h1M494 235.5h1M498 235.5h1M502 235.5h1M506 235.5h1M510 235.5h1M514 235.5h1M518 235.5h1M522 235.5h1M526 235.5h1M530 235.5h1M534 235.5h1M538 235.5h1M542 234.5h1M546 234.5h1M550 234.5h1M554 234.5h1M558 234.5h1M562 234.5h1M566 234.5h1M570 234.5h1M574 234.5h1M578 234.5h1M582 234.5h1M586 234.5h1M590 234.5h1M594 234.5h1M598 234.5h1M602 234.5h1M606 234.5h1M610 234.5h1M614 234.5h1M618 234.5h1M622 234.5h1M626 234.5h1M630 234.5h1M634 234.5h1M638 234.5h1M642 234.5h1M646 234.5h1M650 234.5h1M654 234.5h1M658 234.5h1M662 234.5h1M666 234.5h1M670 234.5h1M674 234.5h1M678 234.5h1M682 234.5h1M686 234.5h1M690 234.5h1M694 234.5h1M698 234.5h1M702 234.5h1M706 234.5h1M710 234.5h1M159 242.5h1M163 242.5h1M167 242.5h1M171 242.5h1M175 242.5h1M179 242.5h1M183 242.5h1M187 242.5h1M191 242.5h1M195 242.5h1M199 242.5h1M203 242.5h1M207 242.5h1M211 242.5h1M215 242.5h1M219 242.5h1M223 242.5h1M227 242.5h1M231 242.5h1M235 242.5h1M239 242.5h1M243 242.5h1M247 242.5h1M251 242.5h1M255 242.5h1M259 242.5h1M263 242.5h1M267 242.5h1M271 242.5h1M275 242.5h1M279 242.5h1M283 242.5h1M287 242.5h1M291 242.5h1M295 242.5h1M299 241.5h1M303 241.5h1M307 241.5h1M311 241.5h1M315 241.5h1M319 241.5h1M323 241.5h1M327 241.5h1M331 241.5h1M335 241.5h1M339 241.5h1M343 241.5h1M347 241.5h1M351 241.5h1M355 241.5h1M359 241.5h1M363 241.5h1M367 241.5h1M371 241.5h1M375 241.5h1M379 241.5h1M383 241.5h1M387 241.5h1M391 241.5h1M395 241.5h1M399 241.5h1M403 241.5h1M407 241.5h1M411 241.5h1M415 241.5h1M419 241.5h1M423 241.5h1M427 241.5h1M431 241.5h1M435 241.5h1M439 241.5h1M443 241.5h1M447 241.5h1M451 241.5h1M455 241.5h1M459 241.5h1M463 241.5h1M467 241.5h1M471 241.5h1M475 241.5h1M479 241.5h1M483 241.5h1M487 241.5h1M491 241.5h1M495 241.5h1M499 241.5h1M503 241.5h1M507 241.5h1M511 241.5h1M515 241.5h1M519 241.5h1M523 241.5h1M527 241.5h1M531 241.5h1M535 241.5h1M539 241.5h1M543 241.5h1M547 241.5h1M551 241.5h1M555 241.5h1M559 241.5h1M563 241.5h1M567 241.5h1M571 241.5h1M575 241.5h1M579 241.5h1M583 241.5h1M587 241.5h1M591 241.5h1M595 241.5h1M599 241.5h1M603 241.5h1M607 241.5h1M611 241.5h1M615 241.5h1M619 241.5h1M623 241.5h1M627 241.5h1M631 241.5h1M635 241.5h1M639 241.5h1M643 241.5h1M647 241.5h1M651 241.5h1M655 241.5h1M659 241.5h1M663 241.5h1M667 241.5h1M671 241.5h1M675 241.5h1M679 241.5h1M683 241.5h1M687 241.5h1M691 241.5h1M695 241.5h1M699 241.5h1M703 241.5h1M707 241.5h1M711 241.5h1M157 249.5h1M161 249.5h1M165 249.5h1M169 249.5h1M173 249.5h1M177 249.5h1M181 249.5h1M185 248.5h1M189 248.5h1M193 248.5h1M197 248.5h1M201 248.5h1M205 248.5h1M209 248.5h1M213 248.5h1M217 248.5h1M221 248.5h1M225 248.5h1M229 248.5h1M233 248.5h1M237 248.5h1M241 248.5h1M245 248.5h1M249 248.5h1M253 248.5h1M257 248.5h1M261 248.5h1M265 248.5h1M269 248.5h1M273 248.5h1M277 248.5h1M281 248.5h1M285 248.5h1M289 248.5h1M293 248.5h1M297 248.5h1M301 248.5h1M305 248.5h1M309 248.5h1M313 248.5h1M317 248.5h1M321 248.5h1M325 248.5h1M329 248.5h1M333 248.5h1M337 248.5h1M341 248.5h1M345 248.5h1M349 248.5h1M353 248.5h1M357 248.5h1M361 248.5h1M365 248.5h1M369 248.5h1M373 248.5h1M377 248.5h1M381 248.5h1M385 248.5h1M389 248.5h1M393 248.5h1M397 248.5h1M401 248.5h1M405 248.5h1M409 248.5h1M413 248.5h1M417 248.5h1M421 248.5h1M425 248.5h1M429 248.5h1M433 248.5h1M437 248.5h1M441 248.5h1M445 248.5h1M449 248.5h1M453 248.5h1M457 248.5h1M461 248.5h1M465 248.5h1M469 248.5h1M473 248.5h1M477 248.5h1M481 248.5h1M485 248.5h1M489 248.5h1M493 248.5h1M497 248.5h1M501 248.5h1M505 248.5h1M509 248.5h1M513 248.5h1M517 248.5h1M521 247.5h1M525 247.5h1M529 247.5h1M533 247.5h1M537 247.5h1M541 247.5h1M545 247.5h1M549 247.5h1M553 247.5h1M557 247.5h1M561 247.5h1M565 247.5h1M569 247.5h1M573 247.5h1M577 247.5h1M581 247.5h1M585 247.5h1M589 247.5h1M593 247.5h1M597 247.5h1M601 247.5h1M605 247.5h1M609 247.5h1M613 247.5h1M617 247.5h1M621 247.5h1M625 247.5h1M629 247.5h1M633 247.5h1M637 247.5h1M641 247.5h1M645 247.5h1M649 247.5h1M653 247.5h1M657 247.5h1M661 247.5h1M665 247.5h1M669 247.5h1M673 247.5h1M677 247.5h1M681 247.5h1M685 247.5h1M689 247.5h1M693 247.5h1M697 247.5h1M701 247.5h1M705 247.5h1M709 247.5h1M159 255.5h1M163 255.5h1M167 255.5h1M171 255.5h1M175 255.5h1M179 255.5h1M183 255.5h1M187 255.5h1M191 255.5h1M195 255.5h1M199 255.5h1M203 255.5h1M207 255.5h1M211 255.5h1M215 255.5h1M219 255.5h1M223 255.5h1M227 255.5h1M231 255.5h1M235 255.5h1M239 255.5h1M243 255.5h1M247 255.5h1M251 255.5h1M255 255.5h1M259 255.5h1M263 255.5h1M267 255.5h1M271 255.5h1M275 255.5h1M279 255.5h1M283 255.5h1M287 255.5h1M291 255.5h1M295 255.5h1M299 255.5h1M303 255.5h1M307 255.5h1M311 255.5h1M315 255.5h1M319 255.5h1M323 255.5h1M327 255.5h1M331 255.5h1M335 255.5h1M339 255.5h1M343 255.5h1M347 255.5h1M351 255.5h1M355 255.5h1M359 255.5h1M363 255.5h1M367 255.5h1M371 254.5h1M375 254.5h1M379 254.5h1M383 254.5h1M387 254.5h1M391 254.5h1M395 254.5h1M399 254.5h1M403 254.5h1M407 254.5h1M411 254.5h1M415 254.5h1M419 254.5h1M423 254.5h1M427 254.5h1M431 254.5h1M435 254.5h1M439 254.5h1M443 254.5h1M447 254.5h1M451 254.5h1M455 254.5h1M459 254.5h1M463 254.5h1M467 254.5h1M471 254.5h1M475 254.5h1M479 254.5h1M483 254.5h1M487 254.5h1M491 254.5h1M495 254.5h1M499 254.5h1M503 254.5h1M507 254.5h1M511 254.5h1M515 254.5h1M519 254.5h1M523 254.5h1M527 254.5h1M531 254.5h1M535 254.5h1M539 254.5h1M543 254.5h1M547 254.5h1M551 254.5h1M555 254.5h1M559 254.5h1M563 254.5h1M567 254.5h1M571 254.5h1M575 254.5h1M579 254.5h1M583 254.5h1M587 254.5h1M591 254.5h1M595 254.5h1M599 254.5h1M603 254.5h1M607 254.5h1M611 254.5h1M615 253.5h1M619 253.5h1M623 253.5h1M627 253.5h1M631 253.5h1M635 253.5h1M639 253.5h1M643 253.5h1M647 253.5h1M651 253.5h1M655 253.5h1M659 253.5h1M663 253.5h1M667 253.5h1M671 253.5h1M675 253.5h1M679 253.5h1M683 253.5h1M687 253.5h1M691 253.5h1M695 253.5h1M699 253.5h1M703 253.5h1M707 253.5h1M711 253.5h1M160 262.5h1M164 262.5h1M168 262.5h1M172 262.5h1M176 262.5h1M180 262.5h1M184 262.5h1M188 262.5h1M192 262.5h1M196 262.5h1M200 262.5h1M204 262.5h1M208 262.5h1M212 262.5h1M216 262.5h1M220 262.5h1M224 262.5h1M228 262.5h1M232 262.5h1M236 262.5h1M240 262.5h1M244 262.5h1M248 262.5h1M252 262.5h1M256 262.5h1M260 262.5h1M264 262.5h1M268 262.5h1M272 262.5h1M276 262.5h1M280 262.5h1M284 261.5h1M288 261.5h1M292 261.5h1M296 261.5h1M300 261.5h1M304 261.5h1M308 261.5h1M312 261.5h1M316 261.5h1M320 261.5h1M324 261.5h1M328 261.5h1M332 261.5h1M336 261.5h1M340 261.5h1M344 261.5h1M348 261.5h1M352 261.5h1M356 261.5h1M360 261.5h1M364 261.5h1M368 261.5h1M372 261.5h1M376 261.5h1M380 261.5h1M384 261.5h1M388 261.5h1M392 261.5h1M396 261.5h1M400 261.5h1M404 261.5h1M408 261.5h1M412 261.5h1M416 261.5h1M420 261.5h1M424 261.5h1M428 261.5h1M432 261.5h1M436 261.5h1M440 261.5h1M444 261.5h1M448 261.5h1M452 261.5h1M456 261.5h1M460 261.5h1M464 261.5h1M468 260.5h1M472 260.5h1M476 260.5h1M480 260.5h1M484 260.5h1M488 260.5h1M492 260.5h1M496 260.5h1M500 260.5h1M504 260.5h1M508 260.5h1M512 260.5h1M516 260.5h1M520 260.5h1M524 260.5h1M528 260.5h1M532 260.5h1M536 260.5h1M540 260.5h1M544 260.5h1M548 260.5h1M552 260.5h1M556 260.5h1M560 260.5h1M564 260.5h1M568 260.5h1M572 260.5h1M576 260.5h1M580 260.5h1M584 260.5h1M588 260.5h1M592 260.5h1M596 260.5h1M600 260.5h1M604 260.5h1M608 260.5h1M612 260.5h1M616 260.5h1M620 260.5h1M624 260.5h1M628 260.5h1M632 260.5h1M636 260.5h1M640 260.5h1M644 260.5h1M648 260.5h1M652 260.5h1M656 259.5h1M660 259.5h1M664 259.5h1M668 259.5h1M672 259.5h1M676 259.5h1M680 259.5h1M684 259.5h1M688 259.5h1M692 259.5h1M696 259.5h1M700 259.5h1M704 259.5h1M708 259.5h1M158 269.5h1M162 269.5h1M166 269.5h1M170 269.5h1M174 269.5h1M178 269.5h1M182 269.5h1M186 269.5h1M190 269.5h1M194 269.5h1M198 269.5h1M202 269.5h1M206 269.5h1M210 269.5h1M214 269.5h1M218 269.5h1M222 268.5h1M226 268.5h1M230 268.5h1M234 268.5h1M238 268.5h1M242 268.5h1M246 268.5h1M250 268.5h1M254 268.5h1M258 268.5h1M262 268.5h1M266 268.5h1M270 268.5h1M274 268.5h1M278 268.5h1M282 268.5h1M286 268.5h1M290 268.5h1M294 268.5h1M298 268.5h1M302 268.5h1M306 268.5h1M310 268.5h1M314 268.5h1M318 268.5h1M322 268.5h1M326 268.5h1M330 268.5h1M334 268.5h1M338 268.5h1M342 268.5h1M346 268.5h1M350 268.5h1M354 268.5h1M358 268.5h1M362 268.5h1M366 268.5h1M370 268.5h1M374 267.5h1M378 267.5h1M382 267.5h1M386 267.5h1M390 267.5h1M394 267.5h1M398 267.5h1M402 267.5h1M406 267.5h1M410 267.5h1M414 267.5h1M418 267.5h1M422 267.5h1M426 267.5h1M430 267.5h1M434 267.5h1M438 267.5h1M442 267.5h1M446 267.5h1M450 267.5h1M454 267.5h1M458 267.5h1M462 267.5h1M466 267.5h1M470 267.5h1M474 267.5h1M478 267.5h1M482 267.5h1M486 267.5h1M490 267.5h1M494 267.5h1M498 267.5h1M502 267.5h1M506 267.5h1M510 267.5h1M514 267.5h1M518 267.5h1M522 266.5h1M526 266.5h1M530 266.5h1M534 266.5h1M538 266.5h1M542 266.5h1M546 266.5h1M550 266.5h1M554 266.5h1M558 266.5h1M562 266.5h1M566 266.5h1M570 266.5h1M574 266.5h1M578 266.5h1M582 266.5h1M586 266.5h1M590 266.5h1M594 266.5h1M598 266.5h1M602 266.5h1M606 266.5h1M610 266.5h1M614 266.5h1M618 266.5h1M622 266.5h1M626 266.5h1M630 266.5h1M634 266.5h1M638 266.5h1M642 266.5h1M646 266.5h1M650 266.5h1M654 266.5h1M658 266.5h1M662 266.5h1M666 265.5h1M670 265.5h1M674 265.5h1M678 265.5h1M682 265.5h1M686 265.5h1M690 265.5h1M694 265.5h1M698 265.5h1M702 265.5h1M706 265.5h1M710 265.5h1M160 276.5h1M164 276.5h1M168 276.5h1M172 276.5h1M176 276.5h1M180 276.5h1M184 275.5h1M188 275.5h1M192 275.5h1M196 275.5h1M200 275.5h1M204 275.5h1M208 275.5h1M212 275.5h1M216 275.5h1M220 275.5h1M224 275.5h1M228 275.5h1M232 275.5h1M236 275.5h1M240 275.5h1M244 275.5h1M248 275.5h1M252 275.5h1M256 275.5h1M260 275.5h1M264 275.5h1M268 275.5h1M272 275.5h1M276 275.5h1M280 275.5h1M284 275.5h1M288 275.5h1M292 275.5h1M296 275.5h1M300 275.5h1M304 275.5h1M308 275.5h1M312 274.5h1M316 274.5h1M320 274.5h1M324 274.5h1M328 274.5h1M332 274.5h1M336 274.5h1M340 274.5h1M344 274.5h1M348 274.5h1M352 274.5h1M356 274.5h1M360 274.5h1M364 274.5h1M368 274.5h1M372 274.5h1M376 274.5h1M380 274.5h1M384 274.5h1M388 274.5h1M392 274.5h1M396 274.5h1M400 274.5h1M404 274.5h1M408 274.5h1M412 274.5h1M416 274.5h1M420 274.5h1M424 273.5h1M428 273.5h1M432 273.5h1M436 273.5h1M440 273.5h1M444 273.5h1M448 273.5h1M452 273.5h1M456 273.5h1M460 273.5h1M464 273.5h1M468 273.5h1M472 273.5h1M476 273.5h1M480 273.5h1M484 273.5h1M488 273.5h1M492 273.5h1M496 273.5h1M500 273.5h1M504 273.5h1M508 273.5h1M512 273.5h1M516 273.5h1M520 273.5h1M524 273.5h1M528 273.5h1M532 273.5h1M536 273.5h1M540 273.5h1M544 273.5h1M548 273.5h1M552 272.5h1M556 272.5h1M560 272.5h1M564 272.5h1M568 272.5h1M572 272.5h1M576 272.5h1M580 272.5h1M584 272.5h1M588 272.5h1M592 272.5h1M596 272.5h1M600 272.5h1M604 272.5h1M608 272.5h1M612 272.5h1M616 272.5h1M620 272.5h1M624 272.5h1M628 272.5h1M632 272.5h1M636 272.5h1M640 272.5h1M644 272.5h1M648 272.5h1M652 272.5h1M656 272.5h1M660 271.5h1M664 271.5h1M668 271.5h1M672 271.5h1M676 271.5h1M680 271.5h1M684 271.5h1M688 271.5h1M692 271.5h1M696 271.5h1M700 271.5h1M704 271.5h1M708 271.5h1M158 283.5h1M162 282.5h1M166 282.5h1M170 282.5h1M174 282.5h1M178 282.5h1M182 282.5h1M186 282.5h1M190 282.5h1M194 282.5h1M198 282.5h1M202 282.5h1M206 282.5h1M210 282.5h1M214 282.5h1M218 282.5h1M222 282.5h1M226 282.5h1M230 282.5h1M234 282.5h1M238 282.5h1M242 282.5h1M246 282.5h1M250 282.5h1M254 282.5h1M258 281.5h1M262 281.5h1M266 281.5h1M270 281.5h1M274 281.5h1M278 281.5h1M282 281.5h1M286 281.5h1M290 281.5h1M294 281.5h1M298 281.5h1M302 281.5h1M306 281.5h1M310 281.5h1M314 281.5h1M318 281.5h1M322 281.5h1M326 281.5h1M330 281.5h1M334 281.5h1M338 281.5h1M342 281.5h1M346 281.5h1M350 281.5h1M354 281.5h1M358 281.5h1M362 281.5h1M366 280.5h1M370 280.5h1M374 280.5h1M378 280.5h1M382 280.5h1M386 280.5h1M390 280.5h1M394 280.5h1M398 280.5h1M402 280.5h1M406 280.5h1M410 280.5h1M414 280.5h1M418 280.5h1M422 280.5h1M426 280.5h1M430 280.5h1M434 280.5h1M438 280.5h1M442 280.5h1M446 280.5h1M450 279.5h1M454 279.5h1M458 279.5h1M462 279.5h1M466 279.5h1M470 279.5h1M474 279.5h1M478 279.5h1M482 279.5h1M486 279.5h1M490 279.5h1M494 279.5h1M498 279.5h1M502 279.5h1M506 279.5h1M510 279.5h1M514 279.5h1M518 279.5h1M522 279.5h1M526 279.5h1M530 279.5h1M534 279.5h1M538 279.5h1M542 279.5h1M546 279.5h1M550 279.5h1M554 279.5h1M558 279.5h1M562 279.5h1M566 278.5h1M570 278.5h1M574 278.5h1M578 278.5h1M582 278.5h1M586 278.5h1M590 278.5h1M594 278.5h1M598 278.5h1M602 278.5h1M606 278.5h1M610 278.5h1M614 278.5h1M618 278.5h1M622 278.5h1M626 278.5h1M630 278.5h1M634 278.5h1M638 278.5h1M642 278.5h1M646 277.5h1M650 277.5h1M654 277.5h1M658 277.5h1M662 277.5h1M666 277.5h1M670 277.5h1M674 277.5h1M678 277.5h1M682 277.5h1M686 277.5h1M690 277.5h1M694 277.5h1M698 277.5h1M702 277.5h1M706 277.5h1M710 277.5h1M159 289.5h1M163 289.5h1M167 289.5h1M391 286.5h1M395 286.5h1M399 286.5h1M403 286.5h1M407 286.5h1M411 286.5h1M415 286.5h1M419 286.5h1M423 286.5h1M427 286.5h1M431 286.5h1M435 286.5h1M439 286.5h1M443 286.5h1M447 286.5h1M451 286.5h1M455 286.5h1M459 286.5h1M463 286.5h1M467 286.5h1M471 286.5h1M475 286.5h1M479 286.5h1M483 286.5h1M487 285.5h1M491 285.5h1M495 285.5h1M499 285.5h1M503 285.5h1M507 285.5h1M511 285.5h1M515 285.5h1M519 285.5h1M523 285.5h1M527 285.5h1M531 285.5h1M535 285.5h1M539 285.5h1M543 285.5h1M547 285.5h1M551 285.5h1M555 285.5h1M559 285.5h1M563 285.5h1M567 284.5h1M571 284.5h1M575 284.5h1M579 284.5h1M583 284.5h1M587 284.5h1M591 284.5h1M595 284.5h1M599 284.5h1M603 284.5h1M607 284.5h1M611 284.5h1M615 284.5h1M619 284.5h1M623 284.5h1M627 284.5h1M631 283.5h1M635 283.5h1M639 283.5h1M643 283.5h1M647 283.5h1M651 283.5h1M655 283.5h1M659 283.5h1M663 283.5h1M667 283.5h1M671 283.5h1M675 283.5h1M679 283.5h1M683 283.5h1M687 283.5h1M691 283.5h1M695 283.5h1M699 283.5h1M703 283.5h1M707 283.5h1M711 283.5h1M157 296.5h1M161 296.5h1M165 296.5h1M169 296.5h1M393 293.5h1M397 292.5h1M401 292.5h1M405 292.5h1M409 292.5h1M413 292.5h1M417 292.5h1M421 292.5h1M425 292.5h1M429 292.5h1M433 292.5h1M437 292.5h1M441 292.5h1M445 292.5h1M449 292.5h1M453 292.5h1M457 292.5h1M461 292.5h1M465 292.5h1M469 292.5h1M473 292.5h1M477 292.5h1M481 292.5h1M485 292.5h1M489 292.5h1M493 292.5h1M497 292.5h1M501 292.5h1M505 292.5h1M509 291.5h1M513 291.5h1M517 291.5h1M521 291.5h1M525 291.5h1M529 291.5h1M533 291.5h1M537 291.5h1M541 291.5h1M545 291.5h1M549 291.5h1M553 291.5h1M557 291.5h1M561 290.5h1M565 290.5h1M569 290.5h1M573 290.5h1M577 290.5h1M581 290.5h1M585 290.5h1M589 290.5h1M593 290.5h1M597 290.5h1M601 290.5h1M605 290.5h1M609 290.5h1M613 289.5h1M617 289.5h1M621 289.5h1M625 289.5h1M629 289.5h1M633 289.5h1M637 289.5h1M641 289.5h1M645 289.5h1M649 289.5h1M653 289.5h1M657 289.5h1M661 289.5h1M665 289.5h1M669 289.5h1M673 289.5h1M677 289.5h1M681 289.5h1M685 289.5h1M689 289.5h1M693 289.5h1M697 289.5h1M701 289.5h1M705 289.5h1M709 289.5h1M159 302.5h1M163 302.5h1M167 302.5h1M391 299.5h1M395 299.5h1M399 299.5h1M403 299.5h1M407 299.5h1M411 299.5h1M415 299.5h1M419 299.5h1M423 299.5h1M427 299.5h1M431 298.5h1M435 298.5h1M439 298.5h1M443 298.5h1M447 298.5h1M451 298.5h1M455 298.5h1M459 298.5h1M463 298.5h1M467 298.5h1M471 298.5h1M475 298.5h1M479 298.5h1M483 298.5h1M487 298.5h1M491 298.5h1M495 298.5h1M499 298.5h1M503 298.5h1M507 298.5h1M511 298.5h1M515 297.5h1M519 297.5h1M523 297.5h1M527 297.5h1M531 297.5h1M535 297.5h1M539 297.5h1M543 297.5h1M547 297.5h1M551 296.5h1M555 296.5h1M559 296.5h1M563 296.5h1M567 296.5h1M571 296.5h1M575 296.5h1M579 296.5h1M583 296.5h1M587 296.5h1M591 296.5h1M595 295.5h1M599 295.5h1M603 295.5h1M607 295.5h1M611 295.5h1M615 295.5h1M619 295.5h1M623 295.5h1M627 295.5h1M631 295.5h1M635 295.5h1M639 295.5h1M643 295.5h1M647 295.5h1M651 295.5h1M655 295.5h1M659 295.5h1M663 295.5h1M667 295.5h1M671 295.5h1M675 295.5h1M679 295.5h1M683 295.5h1M687 295.5h1M691 295.5h1M695 295.5h1M699 295.5h1M703 295.5h1M707 294.5h1M711 294.5h1M160 309.5h1M164 309.5h1M168 309.5h1M392 305.5h1M396 305.5h1M400 305.5h1M404 305.5h1M408 305.5h1M412 305.5h1M416 305.5h1M420 305.5h1M424 305.5h1M428 305.5h1M432 305.5h1M436 305.5h1M440 305.5h1M444 305.5h1M448 305.5h1M452 305.5h1M456 305.5h1M460 305.5h1M464 305.5h1M468 305.5h1M472 304.5h1M476 304.5h1M480 304.5h1M484 304.5h1M488 304.5h1M492 304.5h1M496 304.5h1M500 304.5h1M504 304.5h1M508 304.5h1M512 303.5h1M516 303.5h1M520 303.5h1M524 303.5h1M528 303.5h1M532 303.5h1M536 303.5h1M540 302.5h1M544 302.5h1M548 302.5h1M552 302.5h1M556 302.5h1M560 302.5h1M564 302.5h1M568 302.5h1M572 302.5h1M576 302.5h1M580 301.5h1M584 301.5h1M588 301.5h1M592 301.5h1M596 301.5h1M600 301.5h1M604 301.5h1M608 301.5h1M612 301.5h1M616 301.5h1M620 301.5h1M624 301.5h1M628 301.5h1M632 301.5h1M636 301.5h1M640 301.5h1M644 301.5h1M648 301.5h1M652 301.5h1M656 301.5h1M660 301.5h1M664 301.5h1M668 301.5h1M672 301.5h1M676 301.5h1M680 301.5h1M684 301.5h1M688 300.5h1M692 300.5h1M696 300.5h1M700 300.5h1M704 300.5h1M708 300.5h1M158 316.5h1M162 316.5h1M166 316.5h1M170 316.5h1M390 312.5h1M394 312.5h1M398 312.5h1M402 311.5h1M406 311.5h1M410 311.5h1M414 311.5h1M418 311.5h1M422 311.5h1M426 311.5h1M430 311.5h1M434 311.5h1M438 311.5h1M442 311.5h1M446 311.5h1M450 311.5h1M454 311.5h1M458 311.5h1M462 311.5h1M466 311.5h1M470 311.5h1M474 310.5h1M478 310.5h1M482 310.5h1M486 310.5h1M490 310.5h1M494 310.5h1M498 310.5h1M502 309.5h1M506 309.5h1M510 309.5h1M514 309.5h1M518 309.5h1M522 309.5h1M526 309.5h1M530 308.5h1M534 308.5h1M538 308.5h1M542 308.5h1M546 308.5h1M550 308.5h1M554 308.5h1M558 308.5h1M562 307.5h1M566 307.5h1M570 307.5h1M574 307.5h1M578 307.5h1M582 307.5h1M586 307.5h1M590 307.5h1M594 307.5h1M598 307.5h1M602 307.5h1M606 307.5h1M610 307.5h1M614 307.5h1M618 307.5h1M622 307.5h1M626 307.5h1M630 307.5h1M634 307.5h1M638 307.5h1M642 307.5h1M646 307.5h1M650 307.5h1M654 307.5h1M658 307.5h1M662 307.5h1M666 307.5h1M670 307.5h1M674 306.5h1M678 306.5h1M682 306.5h1M686 306.5h1M690 306.5h1M694 306.5h1M698 306.5h1M702 306.5h1M706 306.5h1M710 305.5h1M160 323.5h1M164 323.5h1M168 323.5h1M392 318.5h1M396 318.5h1M400 318.5h1M404 318.5h1M408 318.5h1M412 318.5h1M416 318.5h1M420 318.5h1M424 318.5h1M428 318.5h1M432 318.5h1M436 318.5h1M440 317.5h1M444 317.5h1M448 317.5h1M452 317.5h1M456 317.5h1M460 317.5h1M464 317.5h1M468 317.5h1M472 316.5h1M476 316.5h1M480 316.5h1M484 316.5h1M488 316.5h1M492 315.5h1M496 315.5h1M500 315.5h1M504 315.5h1M508 315.5h1M512 315.5h1M516 314.5h1M520 314.5h1M524 314.5h1M528 314.5h1M532 314.5h1M536 314.5h1M540 314.5h1M544 314.5h1M548 313.5h1M552 313.5h1M556 313.5h1M560 313.5h1M564 313.5h1M568 313.5h1M572 313.5h1M576 313.5h1M580 313.5h1M584 313.5h1M588 313.5h1M592 313.5h1M596 313.5h1M600 313.5h1M604 313.5h1M608 313.5h1M612 313.5h1M616 313.5h1M620 313.5h1M624 313.5h1M628 313.5h1M632 313.5h1M636 313.5h1M640 313.5h1M644 313.5h1M648 313.5h1M652 313.5h1M656 313.5h1M660 312.5h1M664 312.5h1M668 312.5h1M672 312.5h1M676 312.5h1M680 312.5h1M684 312.5h1M688 311.5h1M692 311.5h1M696 311.5h1M700 311.5h1M704 311.5h1M708 311.5h1M157 330.5h1M161 330.5h1M165 330.5h1M169 330.5h1M393 325.5h1M397 325.5h1M401 325.5h1M405 325.5h1M409 324.5h1M413 324.5h1M417 324.5h1M421 324.5h1M425 324.5h1M429 324.5h1M433 324.5h1M437 324.5h1M441 323.5h1M445 323.5h1M449 323.5h1M453 323.5h1M457 323.5h1M461 323.5h1M465 322.5h1M469 322.5h1M473 322.5h1M477 322.5h1M481 321.5h1M485 321.5h1M489 321.5h1M493 321.5h1M497 321.5h1M501 321.5h1M505 320.5h1M509 320.5h1M513 320.5h1M517 320.5h1M521 320.5h1M525 320.5h1M529 320.5h1M533 319.5h1M537 319.5h1M541 319.5h1M545 319.5h1M549 319.5h1M553 319.5h1M557 319.5h1M561 319.5h1M565 319.5h1M569 319.5h1M573 319.5h1M577 319.5h1M581 319.5h1M585 319.5h1M589 319.5h1M593 319.5h1M597 319.5h1M601 319.5h1M605 319.5h1M609 319.5h1M613 319.5h1M617 319.5h1M621 319.5h1M625 319.5h1M629 319.5h1M633 319.5h1M637 319.5h1M641 319.5h1M645 318.5h1M649 318.5h1M653 318.5h1M657 318.5h1M661 318.5h1M665 318.5h1M669 317.5h1M673 317.5h1M677 317.5h1M681 317.5h1M685 317.5h1M689 316.5h1M693 316.5h1M697 316.5h1M701 316.5h1M705 316.5h1M709 315.5h1M159 338.5h1M163 338.5h1M167 338.5h1M391 331.5h1M395 331.5h1M399 331.5h1M403 331.5h1M407 331.5h1M411 331.5h1M415 330.5h1M419 330.5h1M423 330.5h1M427 330.5h1M431 330.5h1M435 330.5h1M439 329.5h1M443 329.5h1M447 329.5h1M451 329.5h1M455 328.5h1M459 328.5h1M463 328.5h1M467 328.5h1M471 327.5h1M475 327.5h1M479 327.5h1M483 327.5h1M487 327.5h1M491 326.5h1M495 326.5h1M499 326.5h1M503 326.5h1M507 326.5h1M511 326.5h1M515 326.5h1M519 326.5h1M523 325.5h1M527 325.5h1M531 325.5h1M535 325.5h1M539 325.5h1M543 325.5h1M547 325.5h1M551 325.5h1M555 325.5h1M559 325.5h1M563 325.5h1M567 325.5h1M571 325.5h1M575 325.5h1M579 325.5h1M583 325.5h1M587 325.5h1M591 325.5h1M595 325.5h1M599 325.5h1M603 325.5h1M607 325.5h1M611 325.5h1M615 325.5h1M619 325.5h1M623 325.5h1M627 325.5h1M631 324.5h1M635 324.5h1M639 324.5h1M643 324.5h1M647 324.5h1M651 324.5h1M655 323.5h1M659 323.5h1M663 323.5h1M667 323.5h1M671 322.5h1M675 322.5h1M679 322.5h1M683 322.5h1M687 321.5h1M691 321.5h1M695 321.5h1M699 321.5h1M703 321.5h1M707 320.5h1M711 320.5h1M157 345.5h1M161 345.5h1M165 345.5h1M169 344.5h1M393 337.5h1M397 337.5h1M401 337.5h1M405 337.5h1M409 337.5h1M413 336.5h1M417 336.5h1M421 336.5h1M425 336.5h1M429 335.5h1M433 335.5h1M437 335.5h1M441 335.5h1M445 334.5h1M449 334.5h1M453 334.5h1M457 334.5h1M461 333.5h1M465 333.5h1M469 333.5h1M473 333.5h1M477 333.5h1M481 332.5h1M485 332.5h1M489 332.5h1M493 332.5h1M497 332.5h1M501 332.5h1M505 332.5h1M509 332.5h1M513 332.5h1M517 331.5h1M521 331.5h1M525 331.5h1M529 331.5h1M533 331.5h1M537 331.5h1M541 331.5h1M545 331.5h1M549 331.5h1M553 331.5h1M557 332.5h1M561 332.5h1M565 332.5h1M569 332.5h1M573 332.5h1M577 331.5h1M581 331.5h1M585 331.5h1M589 331.5h1M593 331.5h1M597 331.5h1M601 331.5h1M605 331.5h1M609 331.5h1M613 331.5h1M617 330.5h1M621 330.5h1M625 330.5h1M629 330.5h1M633 330.5h1M637 329.5h1M641 329.5h1M645 329.5h1M649 329.5h1M653 328.5h1M657 328.5h1M661 328.5h1M665 328.5h1M669 327.5h1M673 327.5h1M677 327.5h1M681 327.5h1M685 326.5h1M689 326.5h1M693 326.5h1M697 326.5h1M701 326.5h1M705 325.5h1M709 325.5h1M159 352.5h1M163 351.5h1M167 351.5h1M391 343.5h1M395 343.5h1M399 343.5h1M403 343.5h1M407 342.5h1M411 342.5h1M415 342.5h1M419 342.5h1M423 341.5h1M427 341.5h1M431 341.5h1M435 340.5h1M439 340.5h1M443 340.5h1M447 340.5h1M451 339.5h1M455 339.5h1M459 339.5h1M463 339.5h1M467 338.5h1M471 338.5h1M475 338.5h1M479 338.5h1M483 338.5h1M487 338.5h1M491 338.5h1M495 338.5h1M499 338.5h1M503 338.5h1M507 338.5h1M511 338.5h1M515 338.5h1M519 338.5h1M523 338.5h1M527 338.5h1M531 338.5h1M535 338.5h1M539 338.5h1M543 338.5h1M547 338.5h1M551 338.5h1M555 338.5h1M559 338.5h1M563 338.5h1M567 338.5h1M571 338.5h1M575 338.5h1M579 337.5h1M583 337.5h1M587 337.5h1M591 337.5h1M595 337.5h1M599 337.5h1M603 336.5h1M607 336.5h1M611 336.5h1M615 336.5h1M619 335.5h1M623 335.5h1M627 335.5h1M631 335.5h1M635 334.5h1M639 334.5h1M643 334.5h1M647 333.5h1M651 333.5h1M655 333.5h1M659 333.5h1M663 332.5h1M667 332.5h1M671 332.5h1M675 332.5h1M679 331.5h1M683 331.5h1M687 331.5h1M691 331.5h1M695 331.5h1M699 331.5h1M703 331.5h1M707 330.5h1M711 330.5h1M160 358.5h1M164 358.5h1M168 357.5h1M392 349.5h1M396 349.5h1M400 348.5h1M404 348.5h1M408 348.5h1M412 347.5h1M416 347.5h1M420 347.5h1M424 346.5h1M428 346.5h1M432 346.5h1M436 346.5h1M440 345.5h1M444 345.5h1M448 345.5h1M452 345.5h1M456 345.5h1M460 344.5h1M464 344.5h1M468 344.5h1M472 344.5h1M476 344.5h1M480 344.5h1M484 344.5h1M488 344.5h1M492 344.5h1M496 344.5h1M500 344.5h1M504 344.5h1M508 344.5h1M512 344.5h1M516 344.5h1M520 344.5h1M524 344.5h1M528 344.5h1M532 344.5h1M536 344.5h1M540 344.5h1M544 344.5h1M548 344.5h1M552 344.5h1M556 344.5h1M560 344.5h1M564 344.5h1M568 344.5h1M572 343.5h1M576 343.5h1M580 343.5h1M584 343.5h1M588 343.5h1M592 342.5h1M596 342.5h1M600 342.5h1M604 341.5h1M608 341.5h1M612 341.5h1M616 341.5h1M620 340.5h1M624 340.5h1M628 340.5h1M632 339.5h1M636 339.5h1M640 339.5h1M644 338.5h1M648 338.5h1M652 338.5h1M656 337.5h1M660 337.5h1M664 337.5h1M668 337.5h1M672 337.5h1M676 336.5h1M680 336.5h1M684 336.5h1M688 336.5h1M692 336.5h1M696 336.5h1M700 336.5h1M704 336.5h1M708 336.5h1M158 364.5h1M162 364.5h1M166 364.5h1M170 363.5h1M390 354.5h1M394 354.5h1M398 354.5h1M402 353.5h1M406 353.5h1M410 353.5h1M414 352.5h1M418 352.5h1M422 352.5h1M426 352.5h1M430 351.5h1M434 351.5h1M438 351.5h1M442 351.5h1M446 351.5h1M450 351.5h1M454 351.5h1M458 350.5h1M462 350.5h1M466 350.5h1M470 350.5h1M474 350.5h1M478 350.5h1M482 350.5h1M486 350.5h1M490 350.5h1M494 350.5h1M498 351.5h1M502 351.5h1M506 351.5h1M510 351.5h1M514 351.5h1M518 351.5h1M522 351.5h1M526 351.5h1M530 351.5h1M534 350.5h1M538 350.5h1M542 350.5h1M546 350.5h1M550 350.5h1M554 350.5h1M558 350.5h1M562 349.5h1M566 349.5h1M570 349.5h1M574 349.5h1M578 348.5h1M582 348.5h1M586 348.5h1M590 347.5h1M594 347.5h1M598 347.5h1M602 346.5h1M606 346.5h1M610 346.5h1M614 345.5h1M618 345.5h1M622 345.5h1M626 344.5h1M630 344.5h1M634 344.5h1M638 343.5h1M642 343.5h1M646 343.5h1M650 343.5h1M654 342.5h1M658 342.5h1M662 342.5h1M666 342.5h1M670 342.5h1M674 342.5h1M678 342.5h1M682 342.5h1M686 342.5h1M690 342.5h1M694 342.5h1M698 342.5h1M702 342.5h1M706 342.5h1M710 342.5h1M160 370.5h1M164 370.5h1M168 369.5h1M392 359.5h1M396 359.5h1M400 359.5h1M404 358.5h1M408 358.5h1M412 358.5h1M416 358.5h1M420 358.5h1M424 357.5h1M428 357.5h1M432 357.5h1M436 357.5h1M440 357.5h1M444 357.5h1M448 357.5h1M452 357.5h1M456 357.5h1M460 357.5h1M464 357.5h1M468 357.5h1M472 357.5h1M476 357.5h1M480 357.5h1M484 357.5h1M488 357.5h1M492 357.5h1M496 357.5h1M500 357.5h1M504 357.5h1M508 357.5h1M512 357.5h1M516 357.5h1M520 357.5h1M524 357.5h1M528 357.5h1M532 356.5h1M536 356.5h1M540 356.5h1M544 356.5h1M548 356.5h1M552 355.5h1M556 355.5h1M560 355.5h1M564 354.5h1M568 354.5h1M572 354.5h1M576 353.5h1M580 353.5h1M584 353.5h1M588 352.5h1M592 352.5h1M596 351.5h1M600 351.5h1M604 351.5h1M608 350.5h1M612 350.5h1M616 350.5h1M620 349.5h1M624 349.5h1M628 349.5h1M632 349.5h1M636 348.5h1M640 348.5h1M644 348.5h1M648 348.5h1M652 348.5h1M656 348.5h1M660 347.5h1M664 347.5h1M668 347.5h1M672 347.5h1M676 347.5h1M680 347.5h1M684 347.5h1M688 347.5h1M692 347.5h1M696 348.5h1M700 348.5h1M704 348.5h1M708 348.5h1M157 376.5h1M161 376.5h1M165 375.5h1M169 375.5h1M393 365.5h1M397 364.5h1M401 364.5h1M405 364.5h1M409 364.5h1M413 364.5h1M417 364.5h1M421 364.5h1M425 363.5h1M429 363.5h1M433 363.5h1M437 363.5h1M441 363.5h1M445 363.5h1M449 363.5h1M453 363.5h1M457 364.5h1M461 364.5h1M465 364.5h1M469 364.5h1M473 364.5h1M477 364.5h1M481 364.5h1M485 364.5h1M489 364.5h1M493 364.5h1M497 364.5h1M501 364.5h1M505 363.5h1M509 363.5h1M513 363.5h1M517 363.5h1M521 363.5h1M525 362.5h1M529 362.5h1M533 362.5h1M537 362.5h1M541 361.5h1M545 361.5h1M549 361.5h1M553 360.5h1M557 360.5h1M561 359.5h1M565 359.5h1M569 359.5h1M573 358.5h1M577 358.5h1M581 357.5h1M585 357.5h1M589 357.5h1M593 356.5h1M597 356.5h1M601 355.5h1M605 355.5h1M609 355.5h1M613 355.5h1M617 354.5h1M621 354.5h1M625 354.5h1M629 354.5h1M633 354.5h1M637 353.5h1M641 353.5h1M645 353.5h1M649 353.5h1M653 353.5h1M657 353.5h1M661 353.5h1M665 353.5h1M669 353.5h1M673 353.5h1M677 353.5h1M681 353.5h1M685 353.5h1M689 354.5h1M693 354.5h1M697 354.5h1M701 354.5h1M705 354.5h1M709 354.5h1M159 382.5h1M163 382.5h1M167 382.5h1M391 371.5h1M395 370.5h1M399 370.5h1M403 370.5h1M407 370.5h1M411 370.5h1M415 370.5h1M419 370.5h1M423 370.5h1M427 370.5h1M431 370.5h1M435 370.5h1M439 370.5h1M443 370.5h1M447 370.5h1M451 370.5h1M455 370.5h1M459 370.5h1M463 370.5h1M467 370.5h1M471 370.5h1M475 370.5h1M479 370.5h1M483 370.5h1M487 370.5h1M491 370.5h1M495 370.5h1M499 370.5h1M503 369.5h1M507 369.5h1M511 369.5h1M515 369.5h1M519 368.5h1M523 368.5h1M527 367.5h1M531 367.5h1M535 367.5h1M539 366.5h1M543 366.5h1M547 365.5h1M551 365.5h1M555 364.5h1M559 364.5h1M563 364.5h1M567 363.5h1M571 363.5h1M575 362.5h1M579 362.5h1M583 362.5h1M587 361.5h1M591 361.5h1M595 361.5h1M599 360.5h1M603 360.5h1M607 360.5h1M611 360.5h1M615 360.5h1M619 359.5h1M623 359.5h1M627 359.5h1M631 359.5h1M635 359.5h1M639 359.5h1M643 359.5h1M647 359.5h1M651 359.5h1M655 359.5h1M659 359.5h1M663 359.5h1M667 359.5h1M671 359.5h1M675 360.5h1M679 360.5h1M683 360.5h1M687 360.5h1M691 360.5h1M695 360.5h1M699 359.5h1M703 359.5h1M707 359.5h1M711 359.5h1M157 389.5h1M161 389.5h1M165 389.5h1M169 388.5h1M393 377.5h1M397 377.5h1M401 377.5h1M405 377.5h1M409 377.5h1M413 377.5h1M417 377.5h1M421 377.5h1M425 377.5h1M429 377.5h1M433 377.5h1M437 377.5h1M441 377.5h1M445 377.5h1M449 377.5h1M453 377.5h1M457 377.5h1M461 377.5h1M465 377.5h1M469 377.5h1M473 377.5h1M477 377.5h1M481 376.5h1M485 376.5h1M489 376.5h1M493 376.5h1M497 375.5h1M501 375.5h1M505 374.5h1M509 374.5h1M513 374.5h1M517 373.5h1M521 373.5h1M525 372.5h1M529 372.5h1M533 371.5h1M537 371.5h1M541 370.5h1M545 370.5h1M549 370.5h1M553 369.5h1M557 369.5h1M561 368.5h1M565 368.5h1M569 367.5h1M573 367.5h1M577 367.5h1M581 367.5h1M585 366.5h1M589 366.5h1M593 366.5h1M597 366.5h1M601 366.5h1M605 365.5h1M609 365.5h1M613 365.5h1M617 365.5h1M621 365.5h1M625 365.5h1M629 365.5h1M633 365.5h1M637 365.5h1M641 365.5h1M645 365.5h1M649 365.5h1M653 366.5h1M657 366.5h1M661 366.5h1M665 366.5h1M669 366.5h1M673 366.5h1M677 366.5h1M681 366.5h1M685 365.5h1M689 365.5h1M693 365.5h1M697 365.5h1M701 365.5h1M705 365.5h1M709 364.5h1M158 396.5h1M162 396.5h1M166 396.5h1M170 396.5h1M390 384.5h1M394 384.5h1M398 384.5h1M402 384.5h1M406 384.5h1M410 384.5h1M414 384.5h1M418 384.5h1M422 384.5h1M426 384.5h1M430 384.5h1M434 384.5h1M438 384.5h1M442 384.5h1M446 384.5h1M450 384.5h1M454 384.5h1M458 383.5h1M462 383.5h1M466 383.5h1M470 383.5h1M474 382.5h1M478 382.5h1M482 382.5h1M486 381.5h1M490 381.5h1M494 380.5h1M498 380.5h1M502 380.5h1M506 379.5h1M510 379.5h1M514 378.5h1M518 378.5h1M522 377.5h1M526 377.5h1M530 376.5h1M534 376.5h1M538 375.5h1M542 375.5h1M546 374.5h1M550 374.5h1M554 374.5h1M558 373.5h1M562 373.5h1M566 373.5h1M570 372.5h1M574 372.5h1M578 372.5h1M582 372.5h1M586 372.5h1M590 371.5h1M594 371.5h1M598 371.5h1M602 371.5h1M606 371.5h1M610 371.5h1M614 371.5h1M618 371.5h1M622 371.5h1M626 372.5h1M630 372.5h1M634 372.5h1M638 372.5h1M642 372.5h1M646 372.5h1M650 372.5h1M654 372.5h1M658 372.5h1M662 372.5h1M666 372.5h1M670 371.5h1M674 371.5h1M678 371.5h1M682 371.5h1M686 371.5h1M690 370.5h1M694 370.5h1M698 370.5h1M702 369.5h1M706 369.5h1M710 369.5h1M160 404.5h1M164 404.5h1M168 404.5h1M392 391.5h1M396 391.5h1M400 391.5h1M404 391.5h1M408 391.5h1M412 391.5h1M416 391.5h1M420 391.5h1M424 391.5h1M428 391.5h1M432 391.5h1M436 391.5h1M440 390.5h1M444 390.5h1M448 390.5h1M452 390.5h1M456 389.5h1M460 389.5h1M464 389.5h1M468 388.5h1M472 388.5h1M476 387.5h1M480 387.5h1M484 386.5h1M488 386.5h1M492 385.5h1M496 385.5h1M500 384.5h1M504 384.5h1M508 383.5h1M512 383.5h1M516 382.5h1M520 382.5h1M524 381.5h1M528 381.5h1M532 380.5h1M536 380.5h1M540 380.5h1M544 379.5h1M548 379.5h1M552 379.5h1M556 378.5h1M560 378.5h1M564 378.5h1M568 378.5h1M572 378.5h1M576 378.5h1M580 378.5h1M584 378.5h1M588 378.5h1M592 378.5h1M596 378.5h1M600 378.5h1M604 378.5h1M608 378.5h1M612 378.5h1M616 378.5h1M620 378.5h1M624 378.5h1M628 378.5h1M632 378.5h1M636 378.5h1M640 378.5h1M644 378.5h1M648 378.5h1M652 378.5h1M656 378.5h1M660 377.5h1M664 377.5h1M668 377.5h1M672 377.5h1M676 376.5h1M680 376.5h1M684 376.5h1M688 375.5h1M692 375.5h1M696 374.5h1M700 374.5h1M704 373.5h1M708 373.5h1M158 412.5h1M162 412.5h1M166 412.5h1M170 412.5h1M390 398.5h1M394 398.5h1M398 398.5h1M402 398.5h1M406 398.5h1M410 398.5h1M414 398.5h1M418 398.5h1M422 397.5h1M426 397.5h1M430 397.5h1M434 397.5h1M438 396.5h1M442 396.5h1M446 396.5h1M450 395.5h1M454 395.5h1M458 394.5h1M462 394.5h1M466 393.5h1M470 393.5h1M474 392.5h1M478 392.5h1M482 391.5h1M486 390.5h1M490 390.5h1M494 389.5h1M498 389.5h1M502 388.5h1M506 388.5h1M510 387.5h1M514 387.5h1M518 386.5h1M522 386.5h1M526 386.5h1M530 385.5h1M534 385.5h1M538 385.5h1M542 385.5h1M546 384.5h1M550 384.5h1M554 384.5h1M558 384.5h1M562 384.5h1M566 384.5h1M570 384.5h1M574 384.5h1M578 384.5h1M582 384.5h1M586 384.5h1M590 384.5h1M594 384.5h1M598 384.5h1M602 384.5h1M606 384.5h1M610 384.5h1M614 384.5h1M618 384.5h1M622 384.5h1M626 384.5h1M630 384.5h1M634 384.5h1M638 384.5h1M642 384.5h1M646 383.5h1M650 383.5h1M654 383.5h1M658 383.5h1M662 382.5h1M666 382.5h1M670 381.5h1M674 381.5h1M678 380.5h1M682 380.5h1M686 379.5h1M690 379.5h1M694 378.5h1M698 378.5h1M702 377.5h1M706 377.5h1M710 376.5h1M160 420.5h1M164 420.5h1M168 420.5h1M392 405.5h1M396 405.5h1M400 405.5h1M404 405.5h1M408 404.5h1M412 404.5h1M416 404.5h1M420 403.5h1M424 403.5h1M428 403.5h1M432 402.5h1M436 402.5h1M440 401.5h1M444 401.5h1M448 400.5h1M452 400.5h1M456 399.5h1M460 398.5h1M464 398.5h1M468 397.5h1M472 397.5h1M476 396.5h1M480 396.5h1M484 395.5h1M488 395.5h1M492 394.5h1M496 394.5h1M500 393.5h1M504 393.5h1M508 392.5h1M512 392.5h1M516 392.5h1M520 391.5h1M524 391.5h1M528 391.5h1M532 391.5h1M536 391.5h1M540 391.5h1M544 390.5h1M548 390.5h1M552 390.5h1M556 390.5h1M560 390.5h1M564 390.5h1M568 390.5h1M572 391.5h1M576 391.5h1M580 391.5h1M584 391.5h1M588 391.5h1M592 391.5h1M596 391.5h1M600 391.5h1M604 391.5h1M608 391.5h1M612 391.5h1M616 390.5h1M620 390.5h1M624 390.5h1M628 390.5h1M632 390.5h1M636 389.5h1M640 389.5h1M644 389.5h1M648 388.5h1M652 388.5h1M656 387.5h1M660 387.5h1M664 386.5h1M668 386.5h1M672 385.5h1M676 385.5h1M680 384.5h1M684 383.5h1M688 383.5h1M692 382.5h1M696 382.5h1M700 381.5h1M704 381.5h1M708 380.5h1M157 428.5h1M161 427.5h1M165 427.5h1M169 427.5h1M393 411.5h1M397 411.5h1M401 411.5h1M405 410.5h1M409 410.5h1M413 409.5h1M417 409.5h1M421 409.5h1M425 408.5h1M429 407.5h1M433 407.5h1M437 406.5h1M441 406.5h1M445 405.5h1M449 404.5h1M453 404.5h1M457 403.5h1M461 403.5h1M465 402.5h1M469 402.5h1M473 401.5h1M477 401.5h1M481 400.5h1M485 400.5h1M489 399.5h1M493 399.5h1M497 398.5h1M501 398.5h1M505 398.5h1M509 398.5h1M513 397.5h1M517 397.5h1M521 397.5h1M525 397.5h1M529 397.5h1M533 397.5h1M537 397.5h1M541 397.5h1M545 397.5h1M549 397.5h1M553 397.5h1M557 397.5h1M561 397.5h1M565 397.5h1M569 397.5h1M573 397.5h1M577 397.5h1M581 397.5h1M585 397.5h1M589 397.5h1M593 397.5h1M597 397.5h1M601 397.5h1M605 397.5h1M609 396.5h1M613 396.5h1M617 396.5h1M621 395.5h1M625 395.5h1M629 395.5h1M633 394.5h1M637 394.5h1M641 393.5h1M645 393.5h1M649 392.5h1M653 392.5h1M657 391.5h1M661 390.5h1M665 390.5h1M669 389.5h1M673 389.5h1M677 388.5h1M681 387.5h1M685 387.5h1M689 386.5h1M693 386.5h1M697 385.5h1M701 385.5h1M705 384.5h1M709 384.5h1M159 434.5h1M163 434.5h1M167 434.5h1M391 417.5h1M395 417.5h1M399 416.5h1M403 416.5h1M407 415.5h1M411 415.5h1M415 414.5h1M419 413.5h1M423 413.5h1M427 412.5h1M431 412.5h1M435 411.5h1M439 410.5h1M443 410.5h1M447 409.5h1M451 409.5h1M455 408.5h1M459 407.5h1M463 407.5h1M467 406.5h1M471 406.5h1M475 406.5h1M479 405.5h1M483 405.5h1M487 405.5h1M491 404.5h1M495 404.5h1M499 404.5h1M503 404.5h1M507 404.5h1M511 404.5h1M515 404.5h1M519 404.5h1M523 404.5h1M527 404.5h1M531 404.5h1M535 404.5h1M539 404.5h1M543 404.5h1M547 404.5h1M551 404.5h1M555 404.5h1M559 404.5h1M563 404.5h1M567 404.5h1M571 404.5h1M575 404.5h1M579 404.5h1M583 403.5h1M587 403.5h1M591 403.5h1M595 403.5h1M599 402.5h1M603 402.5h1M607 402.5h1M611 401.5h1M615 401.5h1M619 400.5h1M623 400.5h1M627 399.5h1M631 399.5h1M635 398.5h1M639 397.5h1M643 397.5h1M647 396.5h1M651 395.5h1M655 395.5h1M659 394.5h1M663 394.5h1M667 393.5h1M671 392.5h1M675 392.5h1M679 391.5h1M683 391.5h1M687 390.5h1M691 390.5h1M695 390.5h1M699 389.5h1M703 389.5h1M707 389.5h1M711 388.5h1M157 441.5h1M161 440.5h1M165 440.5h1M169 439.5h1M393 422.5h1M397 421.5h1M401 421.5h1M405 420.5h1M409 419.5h1M413 419.5h1M417 418.5h1M421 418.5h1M425 417.5h1M429 416.5h1M433 416.5h1M437 415.5h1M441 415.5h1M445 414.5h1M449 414.5h1M453 413.5h1M457 413.5h1M461 412.5h1M465 412.5h1M469 412.5h1M473 411.5h1M477 411.5h1M481 411.5h1M485 411.5h1M489 411.5h1M493 411.5h1M497 410.5h1M501 410.5h1M505 410.5h1M509 410.5h1M513 410.5h1M517 410.5h1M521 411.5h1M525 411.5h1M529 411.5h1M533 411.5h1M537 411.5h1M541 411.5h1M545 411.5h1M549 411.5h1M553 410.5h1M557 410.5h1M561 410.5h1M565 410.5h1M569 410.5h1M573 410.5h1M577 409.5h1M581 409.5h1M585 409.5h1M589 408.5h1M593 408.5h1M597 407.5h1M601 407.5h1M605 406.5h1M609 406.5h1M613 405.5h1M617 404.5h1M621 404.5h1M625 403.5h1M629 403.5h1M633 402.5h1M637 401.5h1M641 401.5h1M645 400.5h1M649 399.5h1M653 399.5h1M657 398.5h1M661 398.5h1M665 397.5h1M669 397.5h1M673 396.5h1M677 396.5h1M681 395.5h1M685 395.5h1M689 395.5h1M693 395.5h1M697 394.5h1M701 394.5h1M705 394.5h1M709 394.5h1M158 447.5h1M162 446.5h1M166 445.5h1M170 445.5h1M390 427.5h1M394 426.5h1M398 426.5h1M402 425.5h1M406 424.5h1M410 424.5h1M414 423.5h1M418 422.5h1M422 422.5h1M426 421.5h1M430 421.5h1M434 420.5h1M438 420.5h1M442 420.5h1M446 419.5h1M450 419.5h1M454 418.5h1M458 418.5h1M462 418.5h1M466 418.5h1M470 418.5h1M474 418.5h1M478 417.5h1M482 417.5h1M486 417.5h1M490 417.5h1M494 417.5h1M498 417.5h1M502 417.5h1M506 417.5h1M510 417.5h1M514 417.5h1M518 417.5h1M522 417.5h1M526 417.5h1M530 417.5h1M534 417.5h1M538 417.5h1M542 417.5h1M546 417.5h1M550 417.5h1M554 416.5h1M558 416.5h1M562 416.5h1M566 415.5h1M570 415.5h1M574 415.5h1M578 414.5h1M582 414.5h1M586 413.5h1M590 413.5h1M594 412.5h1M598 411.5h1M602 411.5h1M606 410.5h1M610 409.5h1M614 409.5h1M618 408.5h1M622 407.5h1M626 407.5h1M630 406.5h1M634 405.5h1M638 405.5h1M642 404.5h1M646 404.5h1M650 403.5h1M654 403.5h1M658 402.5h1M662 402.5h1M666 402.5h1M670 401.5h1M674 401.5h1M678 401.5h1M682 400.5h1M686 400.5h1M690 400.5h1M694 400.5h1M698 400.5h1M702 400.5h1M706 400.5h1M710 400.5h1M160 452.5h1M164 451.5h1M168 450.5h1M172 450.5h1M176 449.5h1M392 431.5h1M396 430.5h1M400 430.5h1M404 429.5h1M408 429.5h1M412 428.5h1M416 428.5h1M420 427.5h1M424 427.5h1M428 426.5h1M432 426.5h1M436 426.5h1M440 425.5h1M444 425.5h1M448 425.5h1M452 425.5h1M456 425.5h1M460 425.5h1M464 425.5h1M468 424.5h1M472 424.5h1M476 424.5h1M480 424.5h1M484 424.5h1M488 424.5h1M492 424.5h1M496 424.5h1M500 424.5h1M504 424.5h1M508 424.5h1M512 424.5h1M516 424.5h1M520 424.5h1M524 424.5h1M528 424.5h1M532 424.5h1M536 423.5h1M540 423.5h1M544 423.5h1M548 422.5h1M552 422.5h1M556 421.5h1M560 421.5h1M564 420.5h1M568 420.5h1M572 419.5h1M576 419.5h1M580 418.5h1M584 417.5h1M588 417.5h1M592 416.5h1M596 415.5h1M600 415.5h1M604 414.5h1M608 413.5h1M612 413.5h1M616 412.5h1M620 411.5h1M624 411.5h1M628 410.5h1M632 410.5h1M636 409.5h1M640 409.5h1M644 408.5h1M648 408.5h1M652 408.5h1M656 407.5h1M660 407.5h1M664 407.5h1M668 407.5h1M672 406.5h1M676 406.5h1M680 406.5h1M684 406.5h1M688 406.5h1M692 406.5h1M696 406.5h1M700 406.5h1M704 406.5h1M708 406.5h1M158 457.5h1M162 457.5h1M166 456.5h1M170 455.5h1M174 455.5h1M178 454.5h1M182 454.5h1M186 453.5h1M190 453.5h1M194 453.5h1M198 452.5h1M202 452.5h1M206 452.5h1M210 451.5h1M214 451.5h1M218 451.5h1M222 451.5h1M226 451.5h1M230 451.5h1M234 451.5h1M238 451.5h1M242 451.5h1M246 451.5h1M250 451.5h1M254 451.5h1M258 451.5h1M262 451.5h1M266 451.5h1M270 451.5h1M274 451.5h1M278 450.5h1M282 450.5h1M286 450.5h1M290 450.5h1M294 450.5h1M298 449.5h1M302 449.5h1M306 449.5h1M390 436.5h1M394 436.5h1M398 435.5h1M402 435.5h1M406 434.5h1M410 434.5h1M414 433.5h1M418 433.5h1M422 433.5h1M426 433.5h1M430 432.5h1M434 432.5h1M438 432.5h1M442 432.5h1M446 432.5h1M450 432.5h1M454 432.5h1M458 432.5h1M462 432.5h1M466 432.5h1M470 432.5h1M474 432.5h1M478 432.5h1M482 432.5h1M486 431.5h1M490 431.5h1M494 431.5h1M498 431.5h1M502 431.5h1M506 431.5h1M510 431.5h1M514 431.5h1M518 430.5h1M522 430.5h1M526 430.5h1M530 429.5h1M534 429.5h1M538 428.5h1M542 428.5h1M546 427.5h1M550 427.5h1M554 426.5h1M558 426.5h1M562 425.5h1M566 424.5h1M570 424.5h1M574 423.5h1M578 422.5h1M582 422.5h1M586 421.5h1M590 420.5h1M594 420.5h1M598 419.5h1M602 418.5h1M606 418.5h1M610 417.5h1M614 416.5h1M618 416.5h1M622 415.5h1M626 415.5h1M630 415.5h1M634 414.5h1M638 414.5h1M642 414.5h1M646 413.5h1M650 413.5h1M654 413.5h1M658 413.5h1M662 413.5h1M666 413.5h1M670 413.5h1M674 412.5h1M678 412.5h1M682 412.5h1M686 412.5h1M690 412.5h1M694 412.5h1M698 412.5h1M702 412.5h1M706 412.5h1M710 412.5h1M159 463.5h1M163 462.5h1M167 462.5h1M171 461.5h1M175 461.5h1M179 461.5h1M183 460.5h1M187 460.5h1M191 460.5h1M195 460.5h1M199 459.5h1M203 459.5h1M207 459.5h1M211 459.5h1M215 459.5h1M219 459.5h1M223 459.5h1M227 459.5h1M231 459.5h1M235 459.5h1M239 459.5h1M243 459.5h1M247 459.5h1M251 459.5h1M255 459.5h1M259 458.5h1M263 458.5h1M267 458.5h1M271 458.5h1M275 458.5h1M279 457.5h1M283 457.5h1M287 457.5h1M291 456.5h1M295 456.5h1M299 456.5h1M303 455.5h1M307 454.5h1M311 454.5h1M315 453.5h1M319 453.5h1M323 452.5h1M327 451.5h1M331 451.5h1M335 450.5h1M339 449.5h1M343 449.5h1M391 441.5h1M395 441.5h1M399 441.5h1M403 440.5h1M407 440.5h1M411 440.5h1M415 440.5h1M419 439.5h1M423 439.5h1M427 439.5h1M431 439.5h1M435 439.5h1M439 439.5h1M443 439.5h1M447 439.5h1M451 439.5h1M455 439.5h1M459 439.5h1M463 439.5h1M467 439.5h1M471 439.5h1M475 439.5h1M479 438.5h1M483 438.5h1M487 438.5h1M491 438.5h1M495 438.5h1M499 437.5h1M503 437.5h1M507 437.5h1M511 436.5h1M515 436.5h1M519 436.5h1M523 435.5h1M527 435.5h1M531 434.5h1M535 433.5h1M539 433.5h1M543 432.5h1M547 431.5h1M551 431.5h1M555 430.5h1M559 429.5h1M563 429.5h1M567 428.5h1M571 427.5h1M575 427.5h1M579 426.5h1M583 425.5h1M587 425.5h1M591 424.5h1M595 423.5h1M599 423.5h1M603 422.5h1M607 422.5h1M611 421.5h1M615 421.5h1M619 421.5h1M623 420.5h1M627 420.5h1M631 420.5h1M635 420.5h1M639 419.5h1M643 419.5h1M647 419.5h1M651 419.5h1M655 419.5h1M659 419.5h1M663 419.5h1M667 419.5h1M671 419.5h1M675 419.5h1M679 419.5h1M683 419.5h1M687 419.5h1M691 419.5h1M695 419.5h1M699 419.5h1M703 418.5h1M707 418.5h1M711 418.5h1M157 469.5h1M161 469.5h1M165 469.5h1M169 468.5h1M173 468.5h1M177 468.5h1M181 468.5h1M185 467.5h1M189 467.5h1M193 467.5h1M197 467.5h1M201 467.5h1M205 467.5h1M209 467.5h1M213 467.5h1M217 467.5h1M221 467.5h1M225 467.5h1M229 467.5h1M233 467.5h1M237 467.5h1M241 466.5h1M245 466.5h1M249 466.5h1M253 466.5h1M257 466.5h1M261 465.5h1M265 465.5h1M269 465.5h1M273 464.5h1M277 464.5h1M281 464.5h1M285 463.5h1M289 462.5h1M293 462.5h1M297 461.5h1M301 461.5h1M305 460.5h1M309 459.5h1M313 459.5h1M317 458.5h1M321 457.5h1M325 456.5h1M329 456.5h1M333 455.5h1M337 454.5h1M341 454.5h1M345 453.5h1M349 452.5h1M353 452.5h1M357 451.5h1M361 451.5h1M365 450.5h1M369 450.5h1M373 449.5h1M377 449.5h1M393 447.5h1M397 447.5h1M401 447.5h1M405 447.5h1M409 447.5h1M413 447.5h1M417 446.5h1M421 446.5h1M425 446.5h1M429 446.5h1M433 446.5h1M437 446.5h1M441 446.5h1M445 446.5h1M449 446.5h1M453 446.5h1M457 446.5h1M461 446.5h1M465 446.5h1M469 445.5h1M473 445.5h1M477 445.5h1M481 445.5h1M485 444.5h1M489 444.5h1M493 444.5h1M497 443.5h1M501 443.5h1M505 442.5h1M509 442.5h1M513 441.5h1M517 441.5h1M521 440.5h1M525 439.5h1M529 439.5h1M533 438.5h1M537 437.5h1M541 436.5h1M545 436.5h1M549 435.5h1M553 434.5h1M557 434.5h1M561 433.5h1M565 432.5h1M569 432.5h1M573 431.5h1M577 430.5h1M581 430.5h1M585 429.5h1M589 429.5h1M593 428.5h1M597 428.5h1M601 428.5h1M605 427.5h1M609 427.5h1M613 427.5h1M617 426.5h1M621 426.5h1M625 426.5h1M629 426.5h1M633 426.5h1M637 426.5h1M641 426.5h1M645 426.5h1M649 426.5h1M653 426.5h1M657 425.5h1M661 425.5h1M665 425.5h1M669 425.5h1M673 425.5h1M677 425.5h1M681 425.5h1M685 425.5h1M689 425.5h1M693 425.5h1M697 424.5h1M701 424.5h1M705 424.5h1M709 423.5h1M159 476.5h1M163 476.5h1M167 476.5h1M171 476.5h1M175 476.5h1M179 475.5h1M183 475.5h1M187 475.5h1M191 475.5h1M195 475.5h1M199 475.5h1M203 475.5h1M207 475.5h1M211 475.5h1M215 475.5h1M219 475.5h1M223 475.5h1M227 475.5h1M231 474.5h1M235 474.5h1M239 474.5h1M243 474.5h1M247 473.5h1M251 473.5h1M255 473.5h1M259 472.5h1M263 472.5h1M267 471.5h1M271 471.5h1M275 470.5h1M279 469.5h1M283 469.5h1M287 468.5h1M291 467.5h1M295 467.5h1M299 466.5h1M303 465.5h1M307 464.5h1M311 464.5h1M315 463.5h1M319 462.5h1M323 462.5h1M327 461.5h1M331 460.5h1M335 460.5h1M339 459.5h1M343 458.5h1M347 458.5h1M351 457.5h1M355 457.5h1M359 456.5h1M363 456.5h1M367 456.5h1M371 455.5h1M375 455.5h1M379 455.5h1M383 455.5h1M387 454.5h1M391 454.5h1M395 454.5h1M399 454.5h1M403 454.5h1M407 454.5h1M411 454.5h1M415 454.5h1M419 454.5h1M423 454.5h1M427 454.5h1M431 454.5h1M435 453.5h1M439 453.5h1M443 453.5h1M447 453.5h1M451 453.5h1M455 453.5h1M459 452.5h1M463 452.5h1M467 452.5h1M471 451.5h1M475 451.5h1M479 451.5h1M483 450.5h1M487 450.5h1M491 449.5h1M495 448.5h1M499 448.5h1M503 447.5h1M507 447.5h1M511 446.5h1M515 445.5h1M519 444.5h1M523 444.5h1M527 443.5h1M531 442.5h1M535 442.5h1M539 441.5h1M543 440.5h1M547 439.5h1M551 439.5h1M555 438.5h1M559 437.5h1M563 437.5h1M567 436.5h1M571 436.5h1M575 435.5h1M579 435.5h1M583 435.5h1M587 434.5h1M591 434.5h1M595 434.5h1M599 433.5h1M603 433.5h1M607 433.5h1M611 433.5h1M615 433.5h1M619 433.5h1M623 432.5h1M627 432.5h1M631 432.5h1M635 432.5h1M639 432.5h1M643 432.5h1M647 432.5h1M651 432.5h1M655 432.5h1M659 432.5h1M663 432.5h1M667 432.5h1M671 431.5h1M675 431.5h1M679 431.5h1M683 431.5h1M687 430.5h1M691 430.5h1M695 430.5h1M699 429.5h1M703 429.5h1M707 428.5h1M711 428.5h1M157 484.5h1M161 484.5h1M165 484.5h1M169 484.5h1M173 484.5h1M177 484.5h1M181 484.5h1M185 484.5h1M189 483.5h1M193 483.5h1M197 483.5h1M201 483.5h1M205 483.5h1M209 483.5h1M213 483.5h1M217 482.5h1M221 482.5h1M225 482.5h1M229 482.5h1M233 481.5h1M237 481.5h1M241 480.5h1M245 480.5h1M249 479.5h1M253 479.5h1M257 478.5h1M261 478.5h1M265 477.5h1M269 476.5h1M273 476.5h1M277 475.5h1M281 474.5h1M285 473.5h1M289 473.5h1M293 472.5h1M297 471.5h1M301 470.5h1M305 470.5h1M309 469.5h1M313 468.5h1M317 468.5h1M321 467.5h1M325 466.5h1M329 466.5h1M333 465.5h1M337 465.5h1M341 464.5h1M345 464.5h1M349 463.5h1M353 463.5h1M357 463.5h1M361 463.5h1M365 462.5h1M369 462.5h1M373 462.5h1M377 462.5h1M381 462.5h1M385 462.5h1M389 462.5h1M393 461.5h1M397 461.5h1M401 461.5h1M405 461.5h1M409 461.5h1M413 461.5h1M417 461.5h1M421 461.5h1M425 461.5h1M429 461.5h1M433 460.5h1M437 460.5h1M441 460.5h1M445 460.5h1M449 459.5h1M453 459.5h1M457 459.5h1M461 458.5h1M465 458.5h1M469 457.5h1M473 457.5h1M477 456.5h1M481 455.5h1M485 455.5h1M489 454.5h1M493 453.5h1M497 453.5h1M501 452.5h1M505 451.5h1M509 450.5h1M513 450.5h1M517 449.5h1M521 448.5h1M525 447.5h1M529 447.5h1M533 446.5h1M537 445.5h1M541 445.5h1M545 444.5h1M549 444.5h1M553 443.5h1M557 443.5h1M561 442.5h1M565 442.5h1M569 441.5h1M573 441.5h1M577 441.5h1M581 440.5h1M585 440.5h1M589 440.5h1M593 440.5h1M597 440.5h1M601 439.5h1M605 439.5h1M609 439.5h1M613 439.5h1M617 439.5h1M621 439.5h1M625 439.5h1M629 439.5h1M633 439.5h1M637 439.5h1M641 439.5h1M645 439.5h1M649 438.5h1M653 438.5h1M657 438.5h1M661 438.5h1M665 437.5h1M669 437.5h1M673 437.5h1M677 436.5h1M681 436.5h1M685 435.5h1M689 435.5h1M693 434.5h1M697 434.5h1M701 433.5h1M705 432.5h1M709 432.5h1M158 492.5h1M162 492.5h1M166 492.5h1M170 492.5h1M174 492.5h1M178 492.5h1M182 492.5h1M186 492.5h1M190 491.5h1M194 491.5h1M198 491.5h1M202 491.5h1M206 490.5h1M210 490.5h1M214 490.5h1M218 489.5h1M222 489.5h1M226 488.5h1M230 488.5h1M234 487.5h1M238 487.5h1M242 486.5h1M246 485.5h1M250 485.5h1M254 484.5h1M258 483.5h1M262 483.5h1M266 482.5h1M270 481.5h1M274 480.5h1M278 480.5h1M282 479.5h1M286 478.5h1M290 477.5h1M294 477.5h1M298 476.5h1M302 475.5h1M306 475.5h1M310 474.5h1M314 473.5h1M318 473.5h1M322 472.5h1M326 472.5h1M330 472.5h1M334 471.5h1M338 471.5h1M342 471.5h1M346 470.5h1M350 470.5h1M354 470.5h1M358 470.5h1M362 470.5h1M366 469.5h1M370 469.5h1M374 469.5h1M378 469.5h1M382 469.5h1M386 469.5h1M390 469.5h1M394 469.5h1M398 469.5h1M402 469.5h1M406 469.5h1M410 468.5h1M414 468.5h1M418 468.5h1M422 468.5h1M426 467.5h1M430 467.5h1M434 467.5h1M438 466.5h1M442 466.5h1M446 465.5h1M450 465.5h1M454 464.5h1M458 464.5h1M462 463.5h1M466 462.5h1M470 462.5h1M474 461.5h1M478 460.5h1M482 460.5h1M486 459.5h1M490 458.5h1M494 457.5h1M498 456.5h1M502 456.5h1M506 455.5h1M510 454.5h1M514 454.5h1M518 453.5h1M522 452.5h1M526 452.5h1M530 451.5h1M534 450.5h1M538 450.5h1M542 449.5h1M546 449.5h1M550 449.5h1M554 448.5h1M558 448.5h1M562 448.5h1M566 447.5h1M570 447.5h1M574 447.5h1M578 447.5h1M582 447.5h1M586 446.5h1M590 446.5h1M594 446.5h1M598 446.5h1M602 446.5h1M606 446.5h1M610 446.5h1M614 446.5h1M618 446.5h1M622 446.5h1M626 446.5h1M630 445.5h1M634 445.5h1M638 445.5h1M642 445.5h1M646 444.5h1M650 444.5h1M654 444.5h1M658 443.5h1M662 443.5h1M666 442.5h1M670 442.5h1M674 441.5h1M678 441.5h1M682 440.5h1M686 439.5h1M690 439.5h1M694 438.5h1M698 437.5h1M702 437.5h1M706 436.5h1M710 435.5h1M160 500.5h1M164 500.5h1M168 500.5h1M172 500.5h1M176 500.5h1M180 499.5h1M184 499.5h1M188 499.5h1M192 499.5h1M196 498.5h1M200 498.5h1M204 497.5h1M208 497.5h1M212 496.5h1M216 496.5h1M220 495.5h1M224 495.5h1M228 494.5h1M232 493.5h1M236 492.5h1M240 492.5h1M244 491.5h1M248 490.5h1M252 489.5h1M256 489.5h1M260 488.5h1M264 487.5h1M268 486.5h1M272 486.5h1M276 485.5h1M280 484.5h1M284 483.5h1M288 483.5h1M292 482.5h1M296 482.5h1M300 481.5h1M304 481.5h1M308 480.5h1M312 480.5h1M316 479.5h1M320 479.5h1M324 479.5h1M328 478.5h1M332 478.5h1M336 478.5h1M340 478.5h1M344 478.5h1M348 477.5h1M352 477.5h1M356 477.5h1M360 477.5h1M364 477.5h1M368 477.5h1M372 477.5h1M376 477.5h1M380 477.5h1M384 477.5h1M388 476.5h1M392 476.5h1M396 476.5h1M400 476.5h1M404 475.5h1M408 475.5h1M412 475.5h1M416 474.5h1M420 474.5h1M424 474.5h1M428 473.5h1M432 473.5h1M436 472.5h1M440 471.5h1M444 471.5h1M448 470.5h1M452 469.5h1M456 469.5h1M460 468.5h1M464 467.5h1M468 466.5h1M472 466.5h1M476 465.5h1M480 464.5h1M484 463.5h1M488 463.5h1M492 462.5h1M496 461.5h1M500 460.5h1M504 460.5h1M508 459.5h1M512 458.5h1M516 458.5h1M520 457.5h1M524 457.5h1M528 456.5h1M532 456.5h1M536 456.5h1M540 455.5h1M544 455.5h1M548 455.5h1M552 454.5h1M556 454.5h1M560 454.5h1M564 454.5h1M568 454.5h1M572 454.5h1M576 453.5h1M580 453.5h1M584 453.5h1M588 453.5h1M592 453.5h1M596 453.5h1M600 453.5h1M604 453.5h1M608 453.5h1M612 452.5h1M616 452.5h1M620 452.5h1M624 452.5h1M628 451.5h1M632 451.5h1M636 451.5h1M640 450.5h1M644 450.5h1M648 449.5h1M652 449.5h1M656 448.5h1M660 448.5h1M664 447.5h1M668 446.5h1M672 446.5h1M676 445.5h1M680 444.5h1M684 443.5h1M688 443.5h1M692 442.5h1M696 441.5h1M700 440.5h1M704 440.5h1M708 439.5h1M158 508.5h1M162 508.5h1M166 508.5h1M170 508.5h1M174 507.5h1M178 507.5h1M182 506.5h1M186 506.5h1M190 505.5h1M194 505.5h1M198 504.5h1M202 504.5h1M206 503.5h1M210 502.5h1M214 502.5h1M218 501.5h1M222 500.5h1M226 499.5h1M230 499.5h1M234 498.5h1M238 497.5h1M242 496.5h1M246 496.5h1M250 495.5h1M254 494.5h1M258 493.5h1M262 493.5h1M266 492.5h1M270 491.5h1M274 491.5h1M278 490.5h1M282 489.5h1M286 489.5h1M290 488.5h1M294 488.5h1M298 488.5h1M302 487.5h1M306 487.5h1M310 487.5h1M314 486.5h1M318 486.5h1M322 486.5h1M326 486.5h1M330 486.5h1M334 485.5h1M338 485.5h1M342 485.5h1M346 485.5h1M350 485.5h1M354 485.5h1M358 485.5h1M362 485.5h1M366 484.5h1M370 484.5h1M374 484.5h1M378 484.5h1M382 484.5h1M386 483.5h1M390 483.5h1M394 483.5h1M398 482.5h1M402 482.5h1M406 481.5h1M410 481.5h1M414 480.5h1M418 480.5h1M422 479.5h1M426 479.5h1M430 478.5h1M434 477.5h1M438 476.5h1M442 476.5h1M446 475.5h1M450 474.5h1M454 473.5h1M458 473.5h1M462 472.5h1M466 471.5h1M470 470.5h1M474 470.5h1M478 469.5h1M482 468.5h1M486 467.5h1M490 467.5h1M494 466.5h1M498 465.5h1M502 465.5h1M506 464.5h1M510 464.5h1M514 463.5h1M518 463.5h1M522 463.5h1M526 462.5h1M530 462.5h1M534 462.5h1M538 462.5h1M542 461.5h1M546 461.5h1M550 461.5h1M554 461.5h1M558 461.5h1M562 461.5h1M566 461.5h1M570 460.5h1M574 460.5h1M578 460.5h1M582 460.5h1M586 460.5h1M590 460.5h1M594 460.5h1M598 459.5h1M602 459.5h1M606 459.5h1M610 459.5h1M614 458.5h1M618 458.5h1M622 457.5h1M626 457.5h1M630 456.5h1M634 456.5h1M638 455.5h1M642 455.5h1M646 454.5h1M650 453.5h1M654 453.5h1M658 452.5h1M662 451.5h1M666 450.5h1M670 450.5h1M674 449.5h1M678 448.5h1M682 447.5h1M686 447.5h1M690 446.5h1M694 445.5h1M698 444.5h1M702 444.5h1M706 443.5h1M710 442.5h1M171 514.5h1M175 514.5h1M179 513.5h1M183 513.5h1M187 512.5h1M191 511.5h1M195 511.5h1M199 510.5h1M203 509.5h1M207 508.5h1M211 508.5h1M215 507.5h1M219 506.5h1M223 505.5h1M227 504.5h1M231 504.5h1M235 503.5h1M239 502.5h1M243 501.5h1M247 501.5h1M251 500.5h1M255 499.5h1M259 499.5h1M263 498.5h1M267 497.5h1M271 497.5h1M275 496.5h1M279 496.5h1M283 496.5h1M287 495.5h1M291 495.5h1M295 495.5h1M299 494.5h1M303 494.5h1M307 494.5h1M311 494.5h1M315 494.5h1M319 494.5h1M323 493.5h1M327 493.5h1M331 493.5h1M335 493.5h1M339 493.5h1M343 493.5h1M347 493.5h1M351 492.5h1M355 492.5h1M359 492.5h1M363 492.5h1M367 492.5h1M371 491.5h1M375 491.5h1M379 490.5h1M383 490.5h1M387 490.5h1M391 489.5h1M395 489.5h1M399 488.5h1M403 487.5h1M407 487.5h1M411 486.5h1M415 485.5h1M419 485.5h1M423 484.5h1M427 483.5h1M431 482.5h1M435 481.5h1M439 481.5h1M443 480.5h1M447 479.5h1M451 478.5h1M455 478.5h1M459 477.5h1M463 476.5h1M467 475.5h1M471 475.5h1M475 474.5h1M479 473.5h1M483 473.5h1M487 472.5h1M491 472.5h1M495 471.5h1M499 471.5h1M503 470.5h1M507 470.5h1M511 470.5h1M515 469.5h1M519 469.5h1M523 469.5h1M527 469.5h1M531 469.5h1M535 468.5h1M539 468.5h1M543 468.5h1M547 468.5h1M551 468.5h1M555 468.5h1M559 468.5h1M563 468.5h1M567 467.5h1M571 467.5h1M575 467.5h1M579 467.5h1M583 467.5h1M587 466.5h1M591 466.5h1M595 466.5h1M599 465.5h1M603 465.5h1M607 464.5h1M611 464.5h1M615 463.5h1M619 463.5h1M623 462.5h1M627 461.5h1M631 461.5h1M635 460.5h1M639 459.5h1M643 459.5h1M647 458.5h1M651 457.5h1M655 456.5h1M659 455.5h1M663 455.5h1M667 454.5h1M671 453.5h1M675 452.5h1M679 451.5h1M683 451.5h1M687 450.5h1M691 449.5h1M695 449.5h1M699 448.5h1M703 447.5h1M707 447.5h1M711 446.5h1M205 514.5h1M209 513.5h1M213 512.5h1M217 511.5h1M221 511.5h1M225 510.5h1M229 509.5h1M233 508.5h1M237 508.5h1M241 507.5h1M245 507.5h1M249 506.5h1M253 505.5h1M257 505.5h1M261 505.5h1M265 504.5h1M269 504.5h1M273 503.5h1M277 503.5h1M281 503.5h1M285 503.5h1M289 502.5h1M293 502.5h1M297 502.5h1M301 502.5h1M305 502.5h1M309 502.5h1M313 501.5h1M317 501.5h1M321 501.5h1M325 501.5h1M329 501.5h1M333 501.5h1M337 500.5h1M341 500.5h1M345 500.5h1M349 500.5h1M353 499.5h1M357 499.5h1M361 499.5h1M365 498.5h1M369 498.5h1M373 497.5h1M377 497.5h1M381 496.5h1M385 495.5h1M389 495.5h1M393 494.5h1M397 493.5h1M401 493.5h1M405 492.5h1M409 491.5h1M413 490.5h1M417 490.5h1M421 489.5h1M425 488.5h1M429 487.5h1M433 486.5h1M437 485.5h1M441 485.5h1M445 484.5h1M449 483.5h1M453 483.5h1M457 482.5h1M461 481.5h1M465 481.5h1M469 480.5h1M473 479.5h1M477 479.5h1M481 479.5h1M485 478.5h1M489 478.5h1M493 477.5h1M497 477.5h1M501 477.5h1M505 477.5h1M509 476.5h1M513 476.5h1M517 476.5h1M521 476.5h1M525 476.5h1M529 476.5h1M533 475.5h1M537 475.5h1M541 475.5h1M545 475.5h1M549 475.5h1M553 475.5h1M557 475.5h1M561 474.5h1M565 474.5h1M569 474.5h1M573 473.5h1M577 473.5h1M581 473.5h1M585 472.5h1M589 472.5h1M593 471.5h1M597 471.5h1M601 470.5h1M605 469.5h1M609 469.5h1M613 468.5h1M617 467.5h1M621 467.5h1M625 466.5h1M629 465.5h1M633 464.5h1M637 464.5h1M641 463.5h1M645 462.5h1M649 461.5h1M653 460.5h1M657 459.5h1M661 459.5h1M665 458.5h1M669 457.5h1M673 457.5h1M677 456.5h1M681 455.5h1M685 455.5h1M689 454.5h1M693 454.5h1M697 453.5h1M701 453.5h1M705 452.5h1M709 452.5h1M235 514.5h1M239 514.5h1M243 513.5h1M247 513.5h1M251 512.5h1M255 512.5h1M259 512.5h1M263 511.5h1M267 511.5h1M271 511.5h1M275 511.5h1M279 510.5h1M283 510.5h1M287 510.5h1M291 510.5h1M295 510.5h1M299 510.5h1M303 510.5h1M307 509.5h1M311 509.5h1M315 509.5h1M319 509.5h1M323 509.5h1M327 508.5h1M331 508.5h1M335 508.5h1M339 507.5h1M343 507.5h1M347 506.5h1M351 506.5h1M355 505.5h1M359 505.5h1M363 504.5h1M367 504.5h1M371 503.5h1M375 502.5h1M379 502.5h1M383 501.5h1M387 500.5h1M391 499.5h1M395 498.5h1M399 498.5h1M403 497.5h1M407 496.5h1M411 495.5h1M415 494.5h1M419 494.5h1M423 493.5h1M427 492.5h1M431 491.5h1M435 491.5h1M439 490.5h1M443 489.5h1M447 489.5h1M451 488.5h1M455 487.5h1M459 487.5h1M463 486.5h1M467 486.5h1M471 486.5h1M475 485.5h1M479 485.5h1M483 485.5h1M487 484.5h1M491 484.5h1M495 484.5h1M499 484.5h1M503 484.5h1M507 483.5h1M511 483.5h1M515 483.5h1M519 483.5h1M523 483.5h1M527 483.5h1M531 483.5h1M535 482.5h1M539 482.5h1M543 482.5h1M547 482.5h1M551 481.5h1M555 481.5h1M559 481.5h1M563 480.5h1M567 480.5h1M571 479.5h1M575 479.5h1M579 478.5h1M583 478.5h1M587 477.5h1M591 476.5h1M595 476.5h1M599 475.5h1M603 474.5h1M607 473.5h1M611 473.5h1M615 472.5h1M619 471.5h1M623 470.5h1M627 469.5h1M631 468.5h1M635 468.5h1M639 467.5h1M643 466.5h1M647 465.5h1M651 465.5h1M655 464.5h1M659 463.5h1M663 462.5h1M667 462.5h1M671 461.5h1M675 461.5h1M679 460.5h1M683 460.5h1M687 459.5h1M691 459.5h1M695 459.5h1M699 458.5h1M703 458.5h1M707 458.5h1M711 457.5h1M336 514.5h1M340 513.5h1M344 513.5h1M348 512.5h1M352 512.5h1M356 511.5h1M360 510.5h1M364 509.5h1M368 509.5h1M372 508.5h1M376 507.5h1M380 506.5h1M384 505.5h1M388 504.5h1M392 504.5h1M396 503.5h1M400 502.5h1M404 501.5h1M408 500.5h1M412 500.5h1M416 499.5h1M420 498.5h1M424 497.5h1M428 497.5h1M432 496.5h1M436 496.5h1M440 495.5h1M444 495.5h1M448 494.5h1M452 494.5h1M456 493.5h1M460 493.5h1M464 493.5h1M468 492.5h1M472 492.5h1M476 492.5h1M480 492.5h1M484 492.5h1M488 491.5h1M492 491.5h1M496 491.5h1M500 491.5h1M504 491.5h1M508 491.5h1M512 490.5h1M516 490.5h1M520 490.5h1M524 490.5h1M528 489.5h1M532 489.5h1M536 489.5h1M540 488.5h1M544 488.5h1M548 488.5h1M552 487.5h1M556 487.5h1M560 486.5h1M564 485.5h1M568 485.5h1M572 484.5h1M576 483.5h1M580 483.5h1M584 482.5h1M588 481.5h1M592 480.5h1M596 480.5h1M600 479.5h1M604 478.5h1M608 477.5h1M612 476.5h1M616 475.5h1M620 475.5h1M624 474.5h1M628 473.5h1M632 472.5h1M636 471.5h1M640 471.5h1M644 470.5h1M648 469.5h1M652 469.5h1M656 468.5h1M660 468.5h1M664 467.5h1M668 467.5h1M672 466.5h1M676 466.5h1M680 466.5h1M684 465.5h1M688 465.5h1M692 465.5h1M696 465.5h1M700 464.5h1M704 464.5h1M708 464.5h1M366 514.5h1M370 513.5h1M374 512.5h1M378 511.5h1M382 510.5h1M386 510.5h1M390 509.5h1M394 508.5h1M398 507.5h1M402 506.5h1M406 506.5h1M410 505.5h1M414 504.5h1M418 504.5h1M422 503.5h1M426 503.5h1M430 502.5h1M434 502.5h1M438 501.5h1M442 501.5h1M446 501.5h1M450 500.5h1M454 500.5h1M458 500.5h1M462 500.5h1M466 500.5h1M470 499.5h1M474 499.5h1M478 499.5h1M482 499.5h1M486 499.5h1M490 498.5h1M494 498.5h1M498 498.5h1M502 498.5h1M506 498.5h1M510 497.5h1M514 497.5h1M518 497.5h1M522 496.5h1M526 496.5h1M530 495.5h1M534 495.5h1M538 494.5h1M542 494.5h1M546 493.5h1M550 493.5h1M554 492.5h1M558 491.5h1M562 491.5h1M566 490.5h1M570 489.5h1M574 488.5h1M578 487.5h1M582 486.5h1M586 486.5h1M590 485.5h1M594 484.5h1M598 483.5h1M602 482.5h1M606 481.5h1M610 481.5h1M614 480.5h1M618 479.5h1M622 478.5h1M626 478.5h1M630 477.5h1M634 476.5h1M638 476.5h1M642 475.5h1M646 475.5h1M650 474.5h1M654 474.5h1M658 473.5h1M662 473.5h1M666 473.5h1M670 472.5h1M674 472.5h1M678 472.5h1M682 472.5h1M686 471.5h1M690 471.5h1M694 471.5h1M698 471.5h1M702 471.5h1M706 471.5h1M710 470.5h1M388 514.5h1M392 513.5h1M396 513.5h1M400 512.5h1M404 512.5h1M408 511.5h1M412 511.5h1M416 510.5h1M420 510.5h1M424 509.5h1M428 509.5h1M432 509.5h1M436 508.5h1M440 508.5h1M444 508.5h1M448 508.5h1M452 507.5h1M456 507.5h1M460 507.5h1M464 507.5h1M468 507.5h1M472 507.5h1M476 506.5h1M480 506.5h1M484 506.5h1M488 506.5h1M492 505.5h1M496 505.5h1M500 505.5h1M504 504.5h1M508 504.5h1M512 503.5h1M516 503.5h1M520 502.5h1M524 502.5h1M528 501.5h1M532 501.5h1M536 500.5h1M540 499.5h1M544 498.5h1M548 498.5h1M552 497.5h1M556 496.5h1M560 495.5h1M564 494.5h1M568 493.5h1M572 493.5h1M576 492.5h1M580 491.5h1M584 490.5h1M588 489.5h1M592 488.5h1M596 488.5h1M600 487.5h1M604 486.5h1M608 485.5h1M612 485.5h1M616 484.5h1M620 483.5h1M624 483.5h1M628 482.5h1M632 482.5h1M636 481.5h1M640 481.5h1M644 481.5h1M648 480.5h1M652 480.5h1M656 480.5h1M660 479.5h1M664 479.5h1M668 479.5h1M672 479.5h1M676 479.5h1M680 478.5h1M684 478.5h1M688 478.5h1M692 478.5h1M696 478.5h1M700 477.5h1M704 477.5h1M708 477.5h1M462 514.5h1M466 514.5h1M470 514.5h1M474 514.5h1M478 513.5h1M482 513.5h1M486 512.5h1M490 512.5h1M494 512.5h1M498 511.5h1M502 511.5h1M506 510.5h1M510 509.5h1M514 509.5h1M518 508.5h1M522 507.5h1M526 507.5h1M530 506.5h1M534 505.5h1M538 504.5h1M542 503.5h1M546 502.5h1M550 501.5h1M554 501.5h1M558 500.5h1M562 499.5h1M566 498.5h1M570 497.5h1M574 496.5h1M578 496.5h1M582 495.5h1M586 494.5h1M590 493.5h1M594 493.5h1M598 492.5h1M602 491.5h1M606 491.5h1M610 490.5h1M614 490.5h1M618 489.5h1M622 489.5h1M626 488.5h1M630 488.5h1M634 488.5h1M638 487.5h1M642 487.5h1M646 487.5h1M650 487.5h1M654 486.5h1M658 486.5h1M662 486.5h1M666 486.5h1M670 486.5h1M674 485.5h1M678 485.5h1M682 485.5h1M686 485.5h1M690 484.5h1M694 484.5h1M698 484.5h1M702 483.5h1M706 483.5h1M710 483.5h1M511 514.5h1M515 513.5h1M519 512.5h1M523 512.5h1M527 511.5h1M531 510.5h1M535 509.5h1M539 508.5h1M543 507.5h1M547 506.5h1M551 505.5h1M555 505.5h1M559 504.5h1M563 503.5h1M567 502.5h1M571 501.5h1M575 501.5h1M579 500.5h1M583 499.5h1M587 499.5h1M591 498.5h1M595 498.5h1M599 497.5h1M603 497.5h1M607 496.5h1M611 496.5h1M615 496.5h1M619 495.5h1M623 495.5h1M627 495.5h1M631 494.5h1M635 494.5h1M639 494.5h1M643 494.5h1M647 494.5h1M651 493.5h1M655 493.5h1M659 493.5h1M663 493.5h1M667 492.5h1M671 492.5h1M675 492.5h1M679 492.5h1M683 491.5h1M687 491.5h1M691 490.5h1M695 490.5h1M699 489.5h1M703 489.5h1M707 488.5h1M711 488.5h1M533 514.5h1M537 513.5h1M541 512.5h1M545 511.5h1M549 510.5h1M553 510.5h1M557 509.5h1M561 508.5h1M565 507.5h1M569 507.5h1M573 506.5h1M577 506.5h1M581 505.5h1M585 505.5h1M589 504.5h1M593 504.5h1M597 503.5h1M601 503.5h1M605 503.5h1M609 503.5h1M613 502.5h1M617 502.5h1M621 502.5h1M625 502.5h1M629 501.5h1M633 501.5h1M637 501.5h1M641 501.5h1M645 500.5h1M649 500.5h1M653 500.5h1M657 500.5h1M661 499.5h1M665 499.5h1M669 499.5h1M673 498.5h1M677 498.5h1M681 497.5h1M685 497.5h1M689 496.5h1M693 495.5h1M697 495.5h1M701 494.5h1M705 493.5h1M709 493.5h1M555 514.5h1M559 514.5h1M563 513.5h1M567 513.5h1M571 512.5h1M575 512.5h1M579 512.5h1M583 511.5h1M587 511.5h1M591 511.5h1M595 510.5h1M599 510.5h1M603 510.5h1M607 510.5h1M611 509.5h1M615 509.5h1M619 509.5h1M623 509.5h1M627 508.5h1M631 508.5h1M635 508.5h1M639 508.5h1M643 507.5h1M647 507.5h1M651 506.5h1M655 506.5h1M659 506.5h1M663 505.5h1M667 505.5h1M671 504.5h1M675 503.5h1M679 503.5h1M683 502.5h1M687 501.5h1M691 500.5h1M695 500.5h1M699 499.5h1M703 498.5h1M707 497.5h1M711 496.5h1M636 514.5h1M640 514.5h1M644 513.5h1M648 513.5h1M652 512.5h1M656 511.5h1M660 511.5h1M664 510.5h1M668 509.5h1M672 509.5h1M676 508.5h1M680 507.5h1M684 506.5h1M688 505.5h1M692 504.5h1M696 503.5h1M700 503.5h1M704 502.5h1M708 501.5h1M666 514.5h1M670 513.5h1M674 512.5h1M678 512.5h1M682 511.5h1M686 510.5h1M690 509.5h1M694 508.5h1M698 507.5h1M702 506.5h1M706 505.5h1M710 504.5h1M684 514.5h1M688 513.5h1M692 512.5h1M696 512.5h1M700 511.5h1M704 510.5h1M708 509.5h1M709 514.5h1" stroke="#7894d0" stroke-width="1"/>
<rect x="172" y="285" width="217" height="163" fill="#8e9399"/>
<path d="M172 423L187 430.5L191 448H172Z" fill="#d9a46f"/>
<path d="M187 430.5L176 448H190.5Z" fill="#a87a47"/>
<path d="M189.5 436L199 434.5L211 448H189.5Z" fill="#d9a46f"/>
<path d="M369.5 411.5h9.5l-1.5 2.5h-6.5z" fill="#6a6e73"/>
<path d="M366.8 411.8L370 408.6L373 407.2L376.5 409.5L378.6 411.8L373 412.8Z" fill="#d39a63"/>
<circle cx="266" cy="366" r="80.6" fill="#4472c4"/>
<path d="M219 304.5h1M223 302.5h1M227 300.5h1M231 298.5h1M235 296.5h1M239 294.5h1M243 292.5h1M247 290.5h1M204 320.5h1M208 318.5h1M212 316.5h1M216 314.5h1M220 312.5h1M224 310.5h1M228 308.5h1M232 306.5h1M236 304.5h1M240 302.5h1M244 300.5h1M248 298.5h1M252 296.5h1M256 294.5h1M260 292.5h1M264 290.5h1M268 288.5h1M198 332.5h1M202 330.5h1M206 328.5h1M210 326.5h1M214 324.5h1M218 322.5h1M222 320.5h1M226 318.5h1M230 316.5h1M234 314.5h1M238 312.5h1M242 310.5h1M246 308.5h1M250 306.5h1M254 304.5h1M258 302.5h1M262 300.5h1M266 298.5h1M270 296.5h1M274 294.5h1M278 292.5h1M282 290.5h1M191 344.5h1M195 342.5h1M199 340.5h1M203 338.5h1M207 336.5h1M211 334.5h1M215 332.5h1M219 330.5h1M223 328.5h1M227 326.5h1M231 324.5h1M235 322.5h1M239 320.5h1M243 318.5h1M247 316.5h1M251 314.5h1M255 312.5h1M259 310.5h1M263 308.5h1M267 306.5h1M271 304.5h1M275 302.5h1M279 300.5h1M283 298.5h1M287 296.5h1M291 294.5h1M189 354.5h1M193 352.5h1M197 350.5h1M201 348.5h1M205 346.5h1M209 344.5h1M213 342.5h1M217 340.5h1M221 338.5h1M225 336.5h1M229 334.5h1M233 332.5h1M237 330.5h1M241 328.5h1M245 326.5h1M249 324.5h1M253 322.5h1M257 320.5h1M261 318.5h1M265 316.5h1M269 314.5h1M273 312.5h1M277 310.5h1M281 308.5h1M285 306.5h1M289 304.5h1M293 302.5h1M297 300.5h1M301 298.5h1M190 362.5h1M194 360.5h1M198 358.5h1M202 356.5h1M206 354.5h1M210 352.5h1M214 350.5h1M218 348.5h1M222 346.5h1M226 344.5h1M230 342.5h1M234 340.5h1M238 338.5h1M242 336.5h1M246 334.5h1M250 332.5h1M254 330.5h1M258 328.5h1M262 326.5h1M266 324.5h1M270 322.5h1M274 320.5h1M278 318.5h1M282 316.5h1M286 314.5h1M290 312.5h1M294 310.5h1M298 308.5h1M302 306.5h1M306 304.5h1M310 302.5h1M188 371.5h1M192 369.5h1M196 367.5h1M200 365.5h1M204 363.5h1M208 361.5h1M212 359.5h1M216 357.5h1M220 355.5h1M224 353.5h1M228 351.5h1M232 349.5h1M236 347.5h1M240 345.5h1M244 343.5h1M248 341.5h1M252 339.5h1M256 337.5h1M260 335.5h1M264 333.5h1M268 331.5h1M272 329.5h1M276 327.5h1M280 325.5h1M284 323.5h1M288 321.5h1M292 319.5h1M296 317.5h1M300 315.5h1M304 313.5h1M308 311.5h1M312 309.5h1M316 307.5h1M189 379.5h1M193 377.5h1M197 375.5h1M201 373.5h1M205 371.5h1M209 369.5h1M213 367.5h1M217 365.5h1M221 363.5h1M225 361.5h1M229 359.5h1M233 357.5h1M237 355.5h1M241 353.5h1M245 351.5h1M249 349.5h1M253 347.5h1M257 345.5h1M261 343.5h1M265 341.5h1M269 339.5h1M273 337.5h1M277 335.5h1M281 333.5h1M285 331.5h1M289 329.5h1M293 327.5h1M297 325.5h1M301 323.5h1M305 321.5h1M309 319.5h1M313 317.5h1M317 315.5h1M321 313.5h1M191 386.5h1M195 384.5h1M199 382.5h1M203 380.5h1M207 378.5h1M211 376.5h1M215 374.5h1M219 372.5h1M223 370.5h1M227 368.5h1M231 366.5h1M235 364.5h1M239 362.5h1M243 360.5h1M247 358.5h1M251 356.5h1M255 354.5h1M259 352.5h1M263 350.5h1M267 348.5h1M271 346.5h1M275 344.5h1M279 342.5h1M283 340.5h1M287 338.5h1M291 336.5h1M295 334.5h1M299 332.5h1M303 330.5h1M307 328.5h1M311 326.5h1M315 324.5h1M319 322.5h1M323 320.5h1M327 318.5h1M196 392.5h1M200 390.5h1M204 388.5h1M208 386.5h1M212 384.5h1M216 382.5h1M220 380.5h1M224 378.5h1M228 376.5h1M232 374.5h1M236 372.5h1M240 370.5h1M244 368.5h1M248 366.5h1M252 364.5h1M256 362.5h1M260 360.5h1M264 358.5h1M268 356.5h1M272 354.5h1M276 352.5h1M280 350.5h1M284 348.5h1M288 346.5h1M292 344.5h1M296 342.5h1M300 340.5h1M304 338.5h1M308 336.5h1M312 334.5h1M316 332.5h1M320 330.5h1M324 328.5h1M328 326.5h1M198 400.5h1M202 398.5h1M206 396.5h1M210 394.5h1M214 392.5h1M218 390.5h1M222 388.5h1M226 386.5h1M230 384.5h1M234 382.5h1M238 380.5h1M242 378.5h1M246 376.5h1M250 374.5h1M254 372.5h1M258 370.5h1M262 368.5h1M266 366.5h1M270 364.5h1M274 362.5h1M278 360.5h1M282 358.5h1M286 356.5h1M290 354.5h1M294 352.5h1M298 350.5h1M302 348.5h1M306 346.5h1M310 344.5h1M314 342.5h1M318 340.5h1M322 338.5h1M326 336.5h1M330 334.5h1M334 332.5h1M203 406.5h1M207 404.5h1M211 402.5h1M215 400.5h1M219 398.5h1M223 396.5h1M227 394.5h1M231 392.5h1M235 390.5h1M239 388.5h1M243 386.5h1M247 384.5h1M251 382.5h1M255 380.5h1M259 378.5h1M263 376.5h1M267 374.5h1M271 372.5h1M275 370.5h1M279 368.5h1M283 366.5h1M287 364.5h1M291 362.5h1M295 360.5h1M299 358.5h1M303 356.5h1M307 354.5h1M311 352.5h1M315 350.5h1M319 348.5h1M323 346.5h1M327 344.5h1M331 342.5h1M335 340.5h1M205 414.5h1M209 412.5h1M213 410.5h1M217 408.5h1M221 406.5h1M225 404.5h1M229 402.5h1M233 400.5h1M237 398.5h1M241 396.5h1M245 394.5h1M249 392.5h1M253 390.5h1M257 388.5h1M261 386.5h1M265 384.5h1M269 382.5h1M273 380.5h1M277 378.5h1M281 376.5h1M285 374.5h1M289 372.5h1M293 370.5h1M297 368.5h1M301 366.5h1M305 364.5h1M309 362.5h1M313 360.5h1M317 358.5h1M321 356.5h1M325 354.5h1M329 352.5h1M333 350.5h1M337 348.5h1M341 346.5h1M210 420.5h1M214 418.5h1M218 416.5h1M222 414.5h1M226 412.5h1M230 410.5h1M234 408.5h1M238 406.5h1M242 404.5h1M246 402.5h1M250 400.5h1M254 398.5h1M258 396.5h1M262 394.5h1M266 392.5h1M270 390.5h1M274 388.5h1M278 386.5h1M282 384.5h1M286 382.5h1M290 380.5h1M294 378.5h1M298 376.5h1M302 374.5h1M306 372.5h1M310 370.5h1M314 368.5h1M318 366.5h1M322 364.5h1M326 362.5h1M330 360.5h1M334 358.5h1M338 356.5h1M342 354.5h1M216 425.5h1M220 423.5h1M224 421.5h1M228 419.5h1M232 417.5h1M236 415.5h1M240 413.5h1M244 411.5h1M248 409.5h1M252 407.5h1M256 405.5h1M260 403.5h1M264 401.5h1M268 399.5h1M272 397.5h1M276 395.5h1M280 393.5h1M284 391.5h1M288 389.5h1M292 387.5h1M296 385.5h1M300 383.5h1M304 381.5h1M308 379.5h1M312 377.5h1M316 375.5h1M320 373.5h1M324 371.5h1M328 369.5h1M332 367.5h1M336 365.5h1M340 363.5h1M225 429.5h1M229 427.5h1M233 425.5h1M237 423.5h1M241 421.5h1M245 419.5h1M249 417.5h1M253 415.5h1M257 413.5h1M261 411.5h1M265 409.5h1M269 407.5h1M273 405.5h1M277 403.5h1M281 401.5h1M285 399.5h1M289 397.5h1M293 395.5h1M297 393.5h1M301 391.5h1M305 389.5h1M309 387.5h1M313 385.5h1M317 383.5h1M321 381.5h1M325 379.5h1M329 377.5h1M333 375.5h1M337 373.5h1M341 371.5h1M231 434.5h1M235 432.5h1M239 430.5h1M243 428.5h1M247 426.5h1M251 424.5h1M255 422.5h1M259 420.5h1M263 418.5h1M267 416.5h1M271 414.5h1M275 412.5h1M279 410.5h1M283 408.5h1M287 406.5h1M291 404.5h1M295 402.5h1M299 400.5h1M303 398.5h1M307 396.5h1M311 394.5h1M315 392.5h1M319 390.5h1M323 388.5h1M327 386.5h1M331 384.5h1M335 382.5h1M339 380.5h1M240 438.5h1M244 436.5h1M248 434.5h1M252 432.5h1M256 430.5h1M260 428.5h1M264 426.5h1M268 424.5h1M272 422.5h1M276 420.5h1M280 418.5h1M284 416.5h1M288 414.5h1M292 412.5h1M296 410.5h1M300 408.5h1M304 406.5h1M308 404.5h1M312 402.5h1M316 400.5h1M320 398.5h1M324 396.5h1M328 394.5h1M332 392.5h1M336 390.5h1M340 388.5h1M254 440.5h1M258 438.5h1M262 436.5h1M266 434.5h1M270 432.5h1M274 430.5h1M278 428.5h1M282 426.5h1M286 424.5h1M290 422.5h1M294 420.5h1M298 418.5h1M302 416.5h1M306 414.5h1M310 412.5h1M314 410.5h1M318 408.5h1M322 406.5h1M326 404.5h1M330 402.5h1M334 400.5h1M267 442.5h1M271 440.5h1M275 438.5h1M279 436.5h1M283 434.5h1M287 432.5h1M291 430.5h1M295 428.5h1M299 426.5h1M303 424.5h1M307 422.5h1M311 420.5h1M315 418.5h1M319 416.5h1M323 414.5h1M327 412.5h1M293 438.5h1M297 436.5h1M301 434.5h1M305 432.5h1M309 430.5h1" stroke="#7894d0" stroke-width="1"/>
<circle cx="266" cy="366" r="80.6" fill="none" stroke="#2a4c86" stroke-width="1.2"/>
<path d="M322.5 337.5v14.5l3.4-3.2 2.6 6 2.2-1-2.6-5.8h4.6z" fill="#fff" stroke="#111" stroke-width="1" stroke-linejoin="round"/>
</svg>
<div class="a" style="left:413px;top:319px;font-size:26px;line-height:30px;font-weight:bold;color:#fff;white-space:nowrap;-webkit-text-stroke:0.5px #fff;transform:scaleX(1.07);transform-origin:0 0">一</div>
<div class="a" style="left:443px;top:319px;font-size:26px;line-height:30px;font-weight:bold;color:#fff;white-space:nowrap;-webkit-text-stroke:0.5px #fff;transform:scaleX(1.07);transform-origin:0 0">个</div>
<div class="a" style="left:474px;top:319px;font-size:26px;line-height:30px;font-weight:bold;color:#fff;white-space:nowrap;-webkit-text-stroke:0.5px #fff;transform:scaleX(1.07);transform-origin:0 0">人</div>
<div class="a" style="left:504px;top:319px;font-size:26px;line-height:30px;font-weight:bold;color:#fff;white-space:nowrap;-webkit-text-stroke:0.5px #fff;transform:scaleX(1.07);transform-origin:0 0">的</div>
<div class="a" style="left:532px;top:319px;font-size:26px;line-height:30px;font-weight:bold;color:#fff;white-space:nowrap;-webkit-text-stroke:0.5px #fff;transform:scaleX(1.07);transform-origin:0 0">一</div>
<div class="a" style="left:566px;top:319px;font-size:26px;line-height:30px;font-weight:bold;color:#fff;white-space:nowrap;-webkit-text-stroke:0.5px #fff;transform:scaleX(1.07);transform-origin:0 0">小</div>
<div class="a" style="left:595px;top:319px;font-size:26px;line-height:30px;font-weight:bold;color:#fff;white-space:nowrap;-webkit-text-stroke:0.5px #fff;transform:scaleX(1.07);transform-origin:0 0">步</div>
<div class="a" style="left:625px;top:319px;font-size:26px;line-height:30px;font-weight:bold;color:#fff;white-space:nowrap;-webkit-text-stroke:0.5px #fff;transform:scaleX(1.07);transform-origin:0 0">,</div>
<div class="a" style="left:637px;top:319px;font-size:26px;line-height:30px;font-weight:bold;color:#fff;white-space:nowrap;-webkit-text-stroke:0.5px #fff;transform:scaleX(1.07);transform-origin:0 0">却</div>
<div class="a" style="left:413px;top:368px;font-size:26px;line-height:30px;font-weight:bold;color:#fff;white-space:nowrap;-webkit-text-stroke:0.5px #fff;transform:scaleX(1.07);transform-origin:0 0">是</div>
<div class="a" style="left:450px;top:368px;font-size:26px;line-height:30px;font-weight:bold;color:#fff;white-space:nowrap;-webkit-text-stroke:0.5px #fff;transform:scaleX(1.07);transform-origin:0 0">人</div>
<div class="a" style="left:487px;top:368px;font-size:26px;line-height:30px;font-weight:bold;color:#fff;white-space:nowrap;-webkit-text-stroke:0.5px #fff;transform:scaleX(1.07);transform-origin:0 0">类</div>
<div class="a" style="left:525px;top:368px;font-size:26px;line-height:30px;font-weight:bold;color:#fff;white-space:nowrap;-webkit-text-stroke:0.5px #fff;transform:scaleX(1.07);transform-origin:0 0">的</div>
<div class="a" style="left:563px;top:368px;font-size:26px;line-height:30px;font-weight:bold;color:#fff;white-space:nowrap;-webkit-text-stroke:0.5px #fff;transform:scaleX(1.07);transform-origin:0 0">一</div>
<div class="a" style="left:599.5px;top:368px;font-size:26px;line-height:30px;font-weight:bold;color:#fff;white-space:nowrap;-webkit-text-stroke:0.5px #fff;transform:scaleX(1.07);transform-origin:0 0">大</div>
<div class="a" style="left:637.5px;top:368px;font-size:26px;line-height:30px;font-weight:bold;color:#fff;white-space:nowrap;-webkit-text-stroke:0.5px #fff;transform:scaleX(1.07);transform-origin:0 0">步</div>
<svg width="810" height="590" viewBox="0 0 810 590">
<g fill="#fff"><path transform="translate(520.4 269.9)" d="M0.4 11.2C0.6 6 3.2 2.4 7.9 0.2L9.1 1.8C6 3.9 4.7 6.3 4.9 8.5ZM9.2 11.9A4.6 4.6 0 1 1 0 11.9A4.6 4.6 0 1 1 9.2 11.9Z"/><path transform="translate(531.3 269.9)" d="M0.4 11.2C0.6 6 3.2 2.4 7.9 0.2L9.1 1.8C6 3.9 4.7 6.3 4.9 8.5ZM9.2 11.9A4.6 4.6 0 1 1 0 11.9A4.6 4.6 0 1 1 9.2 11.9Z"/>
<path transform="translate(532.6 445.7) rotate(180)" d="M0.4 11.2C0.6 6 3.2 2.4 7.9 0.2L9.1 1.8C6 3.9 4.7 6.3 4.9 8.5ZM9.2 11.9A4.6 4.6 0 1 1 0 11.9A4.6 4.6 0 1 1 9.2 11.9Z"/><path transform="translate(543.3 445.7) rotate(180)" d="M0.4 11.2C0.6 6 3.2 2.4 7.9 0.2L9.1 1.8C6 3.9 4.7 6.3 4.9 8.5ZM9.2 11.9A4.6 4.6 0 1 1 0 11.9A4.6 4.6 0 1 1 9.2 11.9Z"/></g>
</svg>
<div class="st" style="left:3px">幻灯片 第 5 张，共 8 张</div>
<div class="st" style="left:182px">中文(中国)</div>
<div class="st" style="left:414px;top:570px;color:#333">备注</div>
<div class="st" style="left:746px;font-size:12.5px;color:#555">44%</div>
<svg width="810" height="590" viewBox="0 0 810 590">
<rect x="457" y="568" width="38" height="22" fill="#c6c6c6"/>
<g fill="none" stroke="#606060" stroke-width="1.2">
<!-- proofing book -->
<path d="M151.5 571.5v11h5l1.5 1.5 1.5-1.5h4.5v-3M151.5 571.5h4.5l2 1.5v10M158 573l2-1.5h3.5v2"/>
<path d="M159.5 576.5l1.5 2 3-4"/>
<!-- notes icon -->

<!-- normal -->
<rect x="469.6" y="571.6" width="13.3" height="11.8"/>
<path d="M473 571.6v11.8"/>
<rect x="475.6" y="573.8" width="5" height="3.2"/>
<!-- sorter -->
<rect x="507.6" y="571.6" width="5" height="4" rx="0.5"/><rect x="515.6" y="571.6" width="5" height="4" rx="0.5"/>
<rect x="507.6" y="579.2" width="5" height="4" rx="0.5"/><rect x="515.6" y="579.2" width="5" height="4" rx="0.5"/>
<!-- reading -->
<path d="M545.5 572v11h5.5l1 1 1-1h5.5v-11h-5.5l-1 1-1-1z"/>
<path d="M552 573v10M547 574.5h3M547 576.5h3M547 578.5h3M547 580.5h3M554 574.5h3M554 576.5h3M554 578.5h3M554 580.5h3"/>
<!-- slideshow -->
<path d="M583 572.5h13M584.5 572.5v5h10v-5M589.5 577.5v5M587 583h5"/>
<!-- zoom -->
<path d="M614.5 577.7h5.5M727.7 577.7h7M731.2 574.2v7"/>
<rect x="785.6" y="573.6" width="12.5" height="11.5"/>
</g>
<path d="M624 577.8h100" stroke="#9a9a9a" stroke-width="1"/>
<path d="M674.6 575.5v4.5" stroke="#9a9a9a" stroke-width="1"/>
<rect x="642.8" y="571.7" width="4.4" height="11" fill="#606060"/>
<path d="M398 577.5h10.5M398 580.5h10.5M398 583.5h5.5" stroke="#333" stroke-width="1"/><path d="M400.6 574.3h4.8l-2.4-2.3z" fill="#333"/>
<g fill="#606060">
<path d="M788 579.3l2-1.5v3zM796 579.3l-2-1.5v3zM791.8 575.5l-1.5 2h3zM791.8 583.3l-1.5-2h3z"/>
</g>
</svg>
<!-- watermark -->
<svg width="810" height="590" viewBox="0 0 810 590"><text x="574.5" y="552.6" font-family="Liberation Sans" font-weight="bold" font-size="25.5" fill="#111" textLength="149" lengthAdjust="spacingAndGlyphs">www.rjtj.cn</text>
<text x="723.5" y="552.5" font-family="Liberation Sans" font-weight="bold" font-size="26" fill="#111">软荐网</text></svg>

</body></html>
